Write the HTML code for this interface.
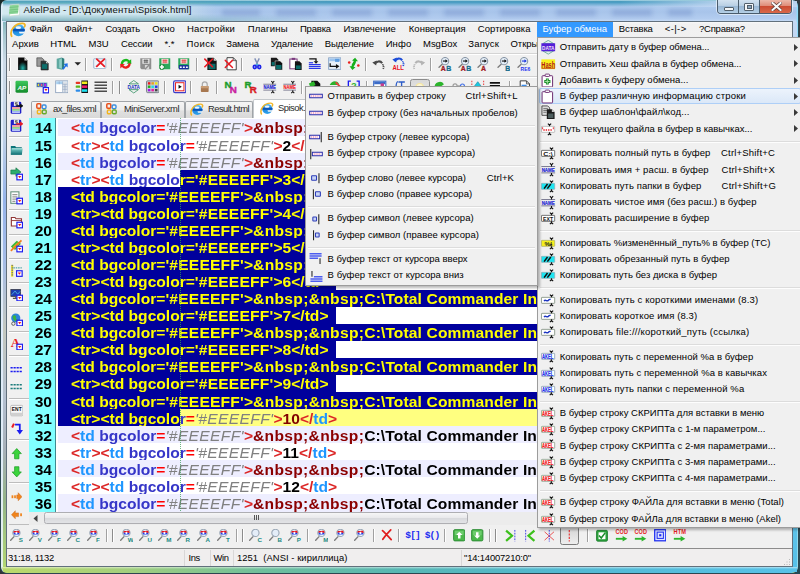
<!DOCTYPE html>
<html lang="ru"><head><meta charset="utf-8"><title>AkelPad - [D:\Документы\Spisok.html]</title>
<style>
html,body{margin:0;padding:0}
body{width:800px;height:574px;overflow:hidden;position:relative;background:linear-gradient(135deg,#1c2a28 0,#34383c 50%,#244a56 100%);font-family:'Liberation Sans',sans-serif}
.a{position:absolute}
.ed{position:absolute;left:58.2px;white-space:pre;font:bold 14.95px/17px 'Liberation Sans',sans-serif;height:17px;color:#000;margin-top:.55px;transform:scaleX(1.0435);transform-origin:0 0}
.ed i{font-weight:normal;font-style:italic;color:#808080;letter-spacing:.345px}
.r{color:#dc2626}.q{color:#ff0000}.t{color:#1e96ff}.b{color:#3636c8}.n{color:#8b0000}
.sel{color:#ffff00}
.c10{color:#800000}
.s{letter-spacing:.2px}.w{letter-spacing:.115px}.w .n,.nn{letter-spacing:.3px}
.ln{position:absolute;left:29px;width:23px;text-align:right;font:bold 14.95px/17px 'Liberation Sans',sans-serif;height:17px;color:#000;margin-top:.55px;transform:scaleX(1.0435);transform-origin:100% 0}
.sep{position:absolute;height:1px;background:#d7d7d7;border-bottom:1px solid #fff}
.mi{position:absolute;white-space:pre;color:#000}
</style></head><body>

<div class="a" style="left:0;top:0;width:799px;height:574px;border-radius:7px 7px 7px 7px;background:#2c4650"></div>
<div class="a" id="frame" style="left:1px;top:0;width:797px;height:573px;border-radius:6px 6px 6px 6px;
background:
linear-gradient(90deg,rgba(235,244,252,.9) 0,rgba(235,244,252,.85) 1.6px,rgba(255,255,255,0) 2.6px,rgba(255,255,255,0) 795px,rgba(140,220,250,.9) 796px),
linear-gradient(180deg,#cfeaf2 0,#4a9cbd 1.2px,#4c9ec4 2.5px,#84b7db 5px,#adcaee 7px,#a8c4ea 12px,#b3cdf0 19px,#c6dbf5 21px,#c3d8f3 40px,#9cb9ea 200px,#8fb0e6 330px,#9fc3d8 470px,#a9d18c 540px,#b7d76e 573px);"></div>

<div class="a" style="left:3px;top:22px;width:3.2px;height:546px;background:linear-gradient(180deg,#86b8c0 0,#a8c8d0 14px,#cddbe8 40px,#c4d4e6 108px,#96b4ea 178px,#a4bce8 238px,#c4c8c0 308px,#b4c0d0 378px,#a8b0b8 428px,#94b488 478px,#a8cc7c 523px,#b4d670 546px)"></div>
<div class="a" style="left:793px;top:22px;width:4px;height:550px;background:linear-gradient(180deg,#c3d8f3 0,#b5d4f2 150px,#8ccdf0 330px,#62c4ea 480px,#56c0e8 550px)"></div>
<div class="a" style="left:2px;top:567px;width:795px;height:6px;border-radius:0 0 6px 6px;background:linear-gradient(90deg,#bcd96a 0,#a5d07c 120px,#6fbf9c 260px,#58b7b4 400px,#52b9d2 560px,#58c2e8 795px)"></div>
<div class="a" style="left:2px;top:567px;width:795px;height:2px;background:linear-gradient(180deg,rgba(255,255,255,.55),rgba(255,255,255,0))"></div>
<div class="a" style="left:620px;top:1px;width:177px;height:6px;background:linear-gradient(90deg,rgba(195,216,243,0),rgba(195,216,243,.9) 60%)"></div>
<div class="a" style="left:222px;top:9px;width:470px;height:7px;background:repeating-linear-gradient(90deg,rgba(112,142,200,.42) 0,rgba(112,142,200,.42) 36px,rgba(0,0,0,0) 40px,rgba(0,0,0,0) 52px,rgba(112,142,200,.42) 56px);filter:blur(2.2px)"></div>
<div class="a" style="left:2px;top:3px;width:215px;height:18px;background:linear-gradient(90deg,rgba(214,236,240,.9) 0,rgba(214,236,240,.85) 78%,rgba(214,236,240,0) 100%);-webkit-mask-image:linear-gradient(180deg,rgba(0,0,0,0) 0,#000 4px)"></div>
<div class="a" style="left:2px;top:14px;width:330px;height:7px;background:linear-gradient(180deg,rgba(120,174,186,0),rgba(120,174,186,.85));-webkit-mask-image:linear-gradient(90deg,#000 0,#000 45%,rgba(0,0,0,0) 100%)"></div>
<div class="a" style="left:2px;top:0px;width:330px;height:4px;border-radius:6px 0 0 0;background:linear-gradient(180deg,rgba(150,206,196,.0),rgba(120,196,186,.55));-webkit-mask-image:linear-gradient(90deg,#000 0,#000 45%,rgba(0,0,0,0) 100%)"></div>
<svg class="a" style="left:8px;top:3px" width="13" height="14" viewBox="0 0 13 14"><path d="M2 2 L11 1.2 L11.5 12 L1.5 13 Z" fill="#fff" stroke="#c9d6c9" stroke-width=".6"/><path d="M2 2.2 L10.8 1.4 L10 10.5 L1 11.3 Z" fill="#8fd69a"/><path d="M1.6 4.5 L10.5 3.7 M1.4 7 L10.3 6.2 M1.2 9.3 L10 8.6" stroke="#6cc07a" stroke-width=".8"/></svg>
<span style="position:absolute;left:23.5px;top:3.9px;line-height:12.5px;font:normal 9.6px/12.5px 'Liberation Sans',sans-serif;letter-spacing:0.123px;color:#111;white-space:pre;">AkelPad - [D:\Документы\Spisok.html]</span>
<div class="a" style="left:717px;top:0;width:75px;height:13.5px;border:1px solid #4a5c6c;border-top:none;border-radius:0 0 4px 4px;box-sizing:border-box;overflow:hidden;box-shadow:0 0 0 1px rgba(255,255,255,.55)">
<div class="a" style="left:0;top:0;width:20px;height:13px;background:linear-gradient(180deg,#d3e2f0 0,#b8cfe4 45%,#9bb9d6 50%,#b4cfe6 100%);border-right:1px solid #4a5c6c"></div>
<div class="a" style="left:21px;top:0;width:20px;height:13px;background:linear-gradient(180deg,#d3e2f0 0,#b8cfe4 45%,#9bb9d6 50%,#b4cfe6 100%);border-right:1px solid #4a5c6c"></div>
<div class="a" style="left:42px;top:0;width:33px;height:13px;background:linear-gradient(180deg,#ecb8aa 0,#df8c78 45%,#cc4c32 50%,#d9684a 100%)"></div>
<div class="a" style="left:5.5px;top:6.5px;width:8px;height:2.5px;background:#f4f6f8;border:.6px solid #53606c;border-radius:1px"></div>
<div class="a" style="left:26px;top:2.5px;width:8px;height:6.5px;background:#f4f6f8;border:.6px solid #53606c;border-radius:1px"></div>
<div class="a" style="left:28.6px;top:4.8px;width:3.6px;height:2px;background:#8ca6bc;border:.5px solid #53606c"></div>
<svg class="a" style="left:52.5px;top:2.3px" width="11" height="9" viewBox="0 0 11 9"><path d="M1.5 1 L9.5 8 M9.5 1 L1.5 8" stroke="#5a3a36" stroke-width="3.4" stroke-linecap="square"/><path d="M1.5 1 L9.5 8 M9.5 1 L1.5 8" stroke="#f8f8f8" stroke-width="2.1" stroke-linecap="square"/></svg>
</div>
<div class="a" style="left:6px;top:21px;width:787px;height:546px;background:#62707c"></div>
<div class="a" id="client" style="left:7px;top:22px;width:785px;height:544px;background:#f0f0f0"></div>
<div class="a" style="left:7px;top:22px;width:785px;height:31px;background:linear-gradient(180deg,#fafafa 0,#f1f1f1 2px,#f0f0f0 100%)"></div>
<div class="a" style="left:7px;top:52.5px;width:785px;height:1px;background:#d4d4d4"></div>
<div class="a" style="left:7px;top:53.5px;width:785px;height:1px;background:#fff"></div>
<svg class="a" style="left:9.6px;top:22px" width="16.5" height="15.5" viewBox="0 0 16 15"><defs><linearGradient id="gie1" x1="0" y1="0" x2="0" y2="1"><stop offset="0" stop-color="#5cc0f6"/><stop offset=".5" stop-color="#1c84dc"/><stop offset="1" stop-color="#30a4ec"/></linearGradient></defs><circle cx="8.3" cy="7.9" r="5.9" fill="url(#gie1)"/><ellipse cx="8.1" cy="5.5" rx="2.7" ry="1.45" fill="#eef6fd"/><rect x="3" y="6.7" width="11.3" height="2.3" fill="#0c54b8"/><path d="M8.6 9.5 H14.6 L13.8 11.2 H9.2Z" fill="#f2f4f6"/><path d="M1.6 13.8 C-.9 8.2 5 1 12.4 1.3 C14.7 1.5 15 3.2 14 4.6" fill="none" stroke="#f2b626" stroke-width="1.7" stroke-linecap="round"/></svg>
<span style="position:absolute;left:29.5px;top:23.0px;line-height:12.3px;font:normal 9.5px/12.3px 'Liberation Sans',sans-serif;letter-spacing:-0.215px;color:#000;white-space:pre;">Файл</span>
<span style="position:absolute;left:64.5px;top:23.0px;line-height:12.3px;font:normal 9.5px/12.3px 'Liberation Sans',sans-serif;letter-spacing:-0.181px;color:#000;white-space:pre;">Файл+</span>
<span style="position:absolute;left:105.4px;top:23.0px;line-height:12.3px;font:normal 9.5px/12.3px 'Liberation Sans',sans-serif;letter-spacing:-0.216px;color:#000;white-space:pre;">Создать</span>
<span style="position:absolute;left:152.3px;top:23.0px;line-height:12.3px;font:normal 9.5px/12.3px 'Liberation Sans',sans-serif;letter-spacing:0.155px;color:#000;white-space:pre;">Окно</span>
<span style="position:absolute;left:187.0px;top:23.0px;line-height:12.3px;font:normal 9.5px/12.3px 'Liberation Sans',sans-serif;letter-spacing:0.156px;color:#000;white-space:pre;">Настройки</span>
<span style="position:absolute;left:247.7px;top:23.0px;line-height:12.3px;font:normal 9.5px/12.3px 'Liberation Sans',sans-serif;letter-spacing:0.226px;color:#000;white-space:pre;">Плагины</span>
<span style="position:absolute;left:299.9px;top:23.0px;line-height:12.3px;font:normal 9.5px/12.3px 'Liberation Sans',sans-serif;letter-spacing:-0.166px;color:#000;white-space:pre;">Правка</span>
<span style="position:absolute;left:343.5px;top:23.0px;line-height:12.3px;font:normal 9.5px/12.3px 'Liberation Sans',sans-serif;letter-spacing:-0.039px;color:#000;white-space:pre;">Извлечение</span>
<span style="position:absolute;left:408.8px;top:23.0px;line-height:12.3px;font:normal 9.5px/12.3px 'Liberation Sans',sans-serif;letter-spacing:0.009px;color:#000;white-space:pre;">Конвертация</span>
<span style="position:absolute;left:477.8px;top:23.0px;line-height:12.3px;font:normal 9.5px/12.3px 'Liberation Sans',sans-serif;letter-spacing:0.056px;color:#000;white-space:pre;">Сортировка</span>
<div class="a" style="left:537px;top:22px;width:76px;height:15.5px;background:#3399ff"></div>
<span style="position:absolute;left:542.5px;top:23.0px;line-height:12.3px;font:normal 9.5px/12.3px 'Liberation Sans',sans-serif;letter-spacing:-0.005px;color:#fff;white-space:pre;">Буфер обмена</span>
<span style="position:absolute;left:618.8px;top:23.0px;line-height:12.3px;font:normal 9.5px/12.3px 'Liberation Sans',sans-serif;letter-spacing:-0.202px;color:#000;white-space:pre;">Вставка</span>
<span style="position:absolute;left:664.7px;top:23.0px;line-height:12.3px;font:normal 9.5px/12.3px 'Liberation Sans',sans-serif;letter-spacing:0.402px;color:#000;white-space:pre;">&lt;-|-&gt;</span>
<span style="position:absolute;left:699.0px;top:23.0px;line-height:12.3px;font:normal 9.5px/12.3px 'Liberation Sans',sans-serif;letter-spacing:-0.227px;color:#000;white-space:pre;">?Справка?</span>
<span style="position:absolute;left:12.0px;top:38.2px;line-height:12.3px;font:normal 9.5px/12.3px 'Liberation Sans',sans-serif;letter-spacing:0.055px;color:#000;white-space:pre;">Архив</span>
<span style="position:absolute;left:50.2px;top:38.2px;line-height:12.3px;font:normal 9.5px/12.3px 'Liberation Sans',sans-serif;letter-spacing:0.106px;color:#000;white-space:pre;">HTML</span>
<span style="position:absolute;left:88.6px;top:38.2px;line-height:12.3px;font:normal 9.5px/12.3px 'Liberation Sans',sans-serif;letter-spacing:0.013px;color:#000;white-space:pre;">M3U</span>
<span style="position:absolute;left:121.0px;top:38.2px;line-height:12.3px;font:normal 9.5px/12.3px 'Liberation Sans',sans-serif;letter-spacing:-0.161px;color:#000;white-space:pre;">Сессии</span>
<span style="position:absolute;left:164.4px;top:38.2px;line-height:12.3px;font:normal 9.5px/12.3px 'Liberation Sans',sans-serif;letter-spacing:-0.016px;color:#000;white-space:pre;">*.*</span>
<span style="position:absolute;left:186.4px;top:38.2px;line-height:12.3px;font:normal 9.5px/12.3px 'Liberation Sans',sans-serif;letter-spacing:0.454px;color:#000;white-space:pre;">Поиск</span>
<span style="position:absolute;left:226.3px;top:38.2px;line-height:12.3px;font:normal 9.5px/12.3px 'Liberation Sans',sans-serif;letter-spacing:-0.113px;color:#000;white-space:pre;">Замена</span>
<span style="position:absolute;left:271.0px;top:38.2px;line-height:12.3px;font:normal 9.5px/12.3px 'Liberation Sans',sans-serif;letter-spacing:-0.100px;color:#000;white-space:pre;">Удаление</span>
<span style="position:absolute;left:324.7px;top:38.2px;line-height:12.3px;font:normal 9.5px/12.3px 'Liberation Sans',sans-serif;letter-spacing:-0.116px;color:#000;white-space:pre;">Выделение</span>
<span style="position:absolute;left:385.7px;top:38.2px;line-height:12.3px;font:normal 9.5px/12.3px 'Liberation Sans',sans-serif;letter-spacing:0.103px;color:#000;white-space:pre;">Инфо</span>
<span style="position:absolute;left:423.0px;top:38.2px;line-height:12.3px;font:normal 9.5px/12.3px 'Liberation Sans',sans-serif;letter-spacing:-0.021px;color:#000;white-space:pre;">MsgBox</span>
<span style="position:absolute;left:468.3px;top:38.2px;line-height:12.3px;font:normal 9.5px/12.3px 'Liberation Sans',sans-serif;letter-spacing:0.164px;color:#000;white-space:pre;">Запуск</span>
<span style="position:absolute;left:510.4px;top:38.2px;line-height:12.3px;font:normal 9.5px/12.3px 'Liberation Sans',sans-serif;letter-spacing:0.000px;color:#000;white-space:pre;">Открыть</span>
<div class="a" style="left:7px;top:76px;width:785px;height:1px;background:#d0d0d0"></div>
<div class="a" style="left:7px;top:77px;width:785px;height:1px;background:#fff"></div>
<div class="a" style="left:8.5px;top:57.5px;width:1px;height:13px;background:#8c8c8c"></div><div class="a" style="left:9.6px;top:57.5px;width:1px;height:13px;background:#fff"></div>
<svg class="a" style="left:16.4px;top:57.2px" width="13.5" height="13.5" viewBox="0 0 16 16"><defs><radialGradient id="gnew" cx=".5" cy=".85" r=".5"><stop offset="0" stop-color="#1fb0a8"/><stop offset="1" stop-color="#0a0a0a"/></radialGradient></defs><path d="M2.5 .5 H10 L13.5 4 V15.5 H2.5Z" fill="url(#gnew)"/><path d="M10 .5 V4 H13.5Z" fill="#d8d8d8"/></svg>
<svg class="a" style="left:35.8px;top:57.2px" width="13.5" height="13.5" viewBox="0 0 16 16"><path d="M1 1 H7 L9.5 3.5 V11 H1Z" fill="#9a9a9a" stroke="#444" stroke-width=".8"/><path d="M6 5 H12 L14.5 7.5 V15.3 H6Z" fill="#2a3a3a" stroke="#222" stroke-width=".8"/><rect x="7.2" y="8.5" width="6" height="5.6" fill="#0c6f6c"/><path d="M12 5 V7.5 H14.5Z" fill="#ddd"/></svg>
<svg class="a" style="left:55.2px;top:57.2px" width="13.5" height="13.5" viewBox="0 0 16 16"><path d="M2 2 L8 .5 V15 L2 13.5Z" fill="#5fa8a0"/><path d="M8 .5 L11 2 V13.5 L8 15Z" fill="#2f7f7c"/><path d="M5 3 L8 2.2 V13.6 L5 12.6Z" fill="#8fd0c8"/><path d="M15 7.5 V12.5 L13.2 11 L10 15 L8.6 13.6 L12 10 L10.2 8.2Z" fill="#1c6fe8"/></svg>
<svg class="a" style="left:72.2px;top:57.2px" width="11.5" height="13.5" viewBox="0 0 16 16"><path d="M3.5 6 H12.5 L8 10.5Z" fill="#222"/></svg>
<div class="a" style="left:85.2px;top:57.5px;width:1px;height:13px;background:#a0a0a0"></div><div class="a" style="left:86.2px;top:57.5px;width:1px;height:13px;background:#fff"></div>
<svg class="a" style="left:93.2px;top:57.2px" width="13.5" height="13.5" viewBox="0 0 16 16"><rect x=".8" y="2" width="14.4" height="11.5" rx="1" fill="#eef4fb" stroke="#8fa9c8" stroke-width=".9"/><path d="M1 13 L6 8 L10 8 L15 13" fill="#fff" stroke="#a8bcd6" stroke-width=".7"/><path d="M4.5 2.5 L13.5 11 M13.5 2.5 L4.5 11" stroke="#e81c24" stroke-width="2.1" stroke-linecap="round"/></svg>
<div class="a" style="left:110.7px;top:57.5px;width:1px;height:13px;background:#a0a0a0"></div><div class="a" style="left:111.7px;top:57.5px;width:1px;height:13px;background:#fff"></div>
<svg class="a" style="left:119.2px;top:57.2px" width="13.5" height="13.5" viewBox="0 0 16 16"><path d="M2.2 8.8 A6 6 0 0 1 12.6 4.2 L14.4 2.6 L14.6 8.2 L9 7.6 L10.8 5.9 A3.6 3.6 0 0 0 4.8 8.6Z" fill="#19b81c"/><path d="M13.8 7.4 A6 6 0 0 1 3.4 11.9 L1.6 13.5 L1.4 7.9 L7 8.5 L5.2 10.2 A3.6 3.6 0 0 0 11.2 7.5Z" fill="#e8201c"/></svg>
<svg class="a" style="left:138.6px;top:57.2px" width="13.5" height="13.5" viewBox="0 0 16 16"><path d="M1.5 1.5 H14.5 V14.5 H3 L1.5 13Z" fill="#8e8e8e"/><rect x="4" y="2.2" width="8.4" height="5.8" fill="#e8e8e8"/><path d="M5.4 4 H11 M5.4 6 H11 M7 2.8 V7.4 M9.4 2.8 V7.4" stroke="#333" stroke-width=".7"/><path d="M7 9.5 H12 V14.5 L7 14.5Z" fill="#d9d9d9"/><path d="M7 14.5 L12 9.5" stroke="#8e8e8e" stroke-width="1.6"/></svg>
<svg class="a" style="left:157.8px;top:57.2px" width="13.5" height="13.5" viewBox="0 0 16 16"><path d="M1.5 1.5 H14.5 V14.5 H3 L1.5 13Z" fill="#2ca85c"/><rect x="4" y="2.2" width="8.4" height="5.8" fill="#f4d8d8"/><path d="M5.4 4 H11 M5.4 6 H11 M7 2.8 V7.4 M9.4 2.8 V7.4" stroke="#e02020" stroke-width=".7"/><path d="M4.6 8.4 V15.4 M1.2 11.9 H8" stroke="#1d8a3a" stroke-width="3.6"/><path d="M4.6 9.2 V14.6 M2 11.9 H7.2" stroke="#fff" stroke-width="1.9"/></svg>
<svg class="a" style="left:177.2px;top:57.2px" width="13.5" height="13.5" viewBox="0 0 16 16"><path d="M1.5 1.5 H14.5 V14.5 H3 L1.5 13Z" fill="#2ca85c"/><rect x="4" y="2.2" width="8.4" height="5.8" fill="#f4d8d8"/><path d="M5.4 4 H11 M5.4 6 H11 M7 2.8 V7.4 M9.4 2.8 V7.4" stroke="#e02020" stroke-width=".7"/><rect x="2.2" y="9.6" width="11.6" height="5" fill="#182c9c"/><path d="M3.4 12.2 H5.6 M7 12.2 H9.2 M10.6 12.2 H12.8" stroke="#fff" stroke-width="1.7"/></svg>
<div class="a" style="left:195.5px;top:57.5px;width:1px;height:13px;background:#a0a0a0"></div><div class="a" style="left:196.5px;top:57.5px;width:1px;height:13px;background:#fff"></div>
<svg class="a" style="left:203.6px;top:57.2px" width="13.5" height="13.5" viewBox="0 0 16 16"><path d="M4 .8 H11.5 L15 4.3 V15.4 H4Z" fill="#101414"/><rect x="5.4" y="8" width="8.2" height="6.4" fill="#0a6a68"/><path d="M11.5 .8 V4.3 H15Z" fill="#ccc"/><path d="M1 2.5 L10 11.5 M10 2.5 L1 11.5" stroke="#e61a22" stroke-width="1.9" stroke-linecap="round"/></svg>
<svg class="a" style="left:224.1px;top:57.2px" width="13.5" height="13.5" viewBox="0 0 16 16"><path d="M3.5 .8 H11 L14.5 4.3 V15.2 H3.5Z" fill="#fff" stroke="#222" stroke-width="1"/><path d="M11 .8 V4.3 H14.5" fill="none" stroke="#222" stroke-width=".8"/><path d="M1.5 4 L10 12.5 M10 4 L1.5 12.5" stroke="#e61a22" stroke-width="1.7" stroke-linecap="round"/></svg>
<div class="a" style="left:241.0px;top:57.5px;width:1px;height:13px;background:#a0a0a0"></div><div class="a" style="left:242.0px;top:57.5px;width:1px;height:13px;background:#fff"></div>
<svg class="a" style="left:250.5px;top:57.2px" width="12" height="13.5" viewBox="0 0 16 16"><path d="M5 .8 L9.4 10 M11 .8 L6.6 10" stroke="#8090b8" stroke-width="1.9"/><circle cx="8" cy="9.2" r="1.3" fill="#3cc8e0"/><ellipse cx="5" cy="12.4" rx="1.9" ry="2.1" fill="none" stroke="#1c24e8" stroke-width="2.3"/><ellipse cx="11" cy="12.4" rx="1.9" ry="2.1" fill="none" stroke="#1c24e8" stroke-width="2.3"/></svg>
<svg class="a" style="left:269.6px;top:57.2px" width="13.5" height="13.5" viewBox="0 0 16 16"><path d="M1 .8 H7.6 L10 3.2 V11 H1Z" fill="#1a1a1a"/><path d="M6 4.6 H12 L14.8 7.4 V15.4 H6Z" fill="#111" stroke="#eee" stroke-width=".6"/><rect x="7.2" y="9.4" width="6.4" height="5" fill="#0b6d6a"/><rect x="2" y="6" width="3.4" height="4" fill="#0b6d6a"/></svg>
<svg class="a" style="left:288.8px;top:57.2px" width="13.5" height="13.5" viewBox="0 0 16 16"><rect x="1" y="2.4" width="8.6" height="11.6" fill="#fff" stroke="#7a3a7e" stroke-width="1.2"/><rect x="3.2" y="1" width="4.2" height="2.4" fill="#7a3a7e"/><path d="M7 5 H12.4 L15 7.6 V15.4 H7Z" fill="#141414"/><rect x="8.2" y="10" width="5.6" height="4.4" fill="#0b6d6a"/></svg>
<svg class="a" style="left:308.1px;top:57.2px" width="13.5" height="13.5" viewBox="0 0 16 16"><path d="M1.5 2.2 H9.5 V5.6" fill="none" stroke="#111" stroke-width="1.5"/><path d="M6.7 5 H12.3 L9.5 8Z" fill="#111"/><path d="M1 9 H15 M1 11.3 H15 M1 13.6 H15" stroke="#2a36e8" stroke-width="1.4"/><path d="M1 6.8 H6" stroke="#2a36e8" stroke-width="1.4"/></svg>
<svg class="a" style="left:327.8px;top:57.2px" width="13.5" height="13.5" viewBox="0 0 16 16"><rect x=".8" y="1" width="14.4" height="13.6" fill="#e9f1fa" stroke="#7f9cc0" stroke-width="1"/><rect x="1.6" y="1.8" width="12.8" height="3.2" fill="#9cc4ee"/><rect x="8.4" y="2.2" width="5" height="3.6" fill="#5c9ce0"/><path d="M2.6 7.4 V11 H9.6" fill="none" stroke="#111" stroke-width="1.5"/><path d="M9.4 8.2 L13.6 11 L9.4 13.8Z" fill="#111"/></svg>
<svg class="a" style="left:347.1px;top:57.2px" width="13.5" height="13.5" viewBox="0 0 16 16"><path d="M9.6 .8 L13 5 H10.8 L8 11 L5.4 9.6 L8.2 4.6 L6 4Z" fill="#18b01c"/><path d="M6.4 15.4 L3 11 H5.2 L8 5.4 L10.6 6.6 L7.8 11.6 L10 12.2Z" fill="#18b01c"/><circle cx="2.6" cy="6.4" r="1.5" fill="#e8201c"/><circle cx="13.4" cy="10" r="1.5" fill="#e8201c"/></svg>
<div class="a" style="left:365.0px;top:57.5px;width:1px;height:13px;background:#a0a0a0"></div><div class="a" style="left:366.0px;top:57.5px;width:1px;height:13px;background:#fff"></div>
<svg class="a" style="left:372.2px;top:57.2px" width="13.5" height="13.5" viewBox="0 0 16 16"><path d="M3 8.4 C5.2 4.6 10 4.2 12 7.4" fill="none" stroke="#484848" stroke-width="2.5"/><path d="M.4 6.4 L5.6 4 L5 10Z" fill="#484848"/><path d="M12 8.8 L14.2 9.8 M12.6 11 L14.8 11.8 M12.4 13.2 L14.4 13.8" stroke="#484848" stroke-width="1.2"/></svg>
<svg class="a" style="left:391.8px;top:57.2px" width="13.5" height="13.5" viewBox="0 0 16 16"><path d="M3 5.0 C5.2 1.2000000000000002 10 0.8000000000000003 12 4.0" fill="none" stroke="#1c4cd8" stroke-width="2.5"/><path d="M.4 3.0000000000000004 L5.6 0.6000000000000001 L5 6.6Z" fill="#1c4cd8"/><path d="M12 5.4 L14.2 6.4 M12.6 7.6 L14.8 8.4 M12.4 9.799999999999999 L14.4 10.4" stroke="#1c4cd8" stroke-width="1.2"/><text x="7.4" y="15.9" font-size="9" font-weight="bold" fill="#e8101c" text-anchor="middle" style="font-family:'Liberation Sans',sans-serif" textLength="13.6" lengthAdjust="spacingAndGlyphs">ALL</text></svg>
<svg class="a" style="left:412.2px;top:57.2px" width="13.5" height="13.5" viewBox="0 0 16 16"><g transform="translate(16,0) scale(-1,1)"><path d="M3 8.4 C5.2 4.6 10 4.2 12 7.4" fill="none" stroke="#b4b4b4" stroke-width="2.5"/><path d="M.4 6.4 L5.6 4 L5 10Z" fill="#b4b4b4"/><path d="M12 8.8 L14.2 9.8 M12.6 11 L14.8 11.8 M12.4 13.2 L14.4 13.8" stroke="#b4b4b4" stroke-width="1.2"/></g></svg>
<div class="a" style="left:429.5px;top:57.5px;width:1px;height:13px;background:#a0a0a0"></div><div class="a" style="left:430.5px;top:57.5px;width:1px;height:13px;background:#fff"></div>
<svg class="a" style="left:438.4px;top:57.2px" width="13.5" height="13.5" viewBox="0 0 16 16"><path d="M1.2 12.2 L5.6 8" stroke="#7c7c7c" stroke-width="1.6" stroke-linecap="round"/><circle cx="8.4" cy="4.9" r="4.3" fill="#e4eef8" stroke="#8a97a6" stroke-width="1.3"/><path d="M5.8 4.8 H9.8" stroke="#111" stroke-width="1.3"/><path d="M8.8 2.8 L11.6 4.8 L8.8 6.8Z" fill="#111"/><text x="6.2" y="16" font-size="8.2" font-weight="bold" fill="#a01c24" text-anchor="middle" style="font-family:'Liberation Sans',sans-serif" stroke-width=".35" stroke="#a01c24">A</text><text x="12.6" y="16" font-size="8.2" font-weight="bold" fill="#146c8c" text-anchor="middle" style="font-family:'Liberation Sans',sans-serif" stroke-width=".35" stroke="#146c8c">B</text></svg>
<svg class="a" style="left:458.4px;top:57.2px" width="13.5" height="13.5" viewBox="0 0 16 16"><path d="M1.2 12.2 L5.6 8" stroke="#7c7c7c" stroke-width="1.6" stroke-linecap="round"/><circle cx="8.4" cy="4.9" r="4.3" fill="#e4eef8" stroke="#8a97a6" stroke-width="1.3"/><path d="M5.8 4.8 H9.8" stroke="#111" stroke-width="1.3"/><path d="M8.8 2.8 L11.6 4.8 L8.8 6.8Z" fill="#111"/><text x="6.2" y="16" font-size="8.2" font-weight="bold" fill="#a01c24" text-anchor="middle" style="font-family:'Liberation Sans',sans-serif" stroke-width=".35" stroke="#a01c24">A</text><text x="12.6" y="16" font-size="8.2" font-weight="bold" fill="#146c8c" text-anchor="middle" style="font-family:'Liberation Sans',sans-serif" stroke-width=".35" stroke="#146c8c">B</text></svg>
<svg class="a" style="left:477.2px;top:57.2px" width="13.5" height="13.5" viewBox="0 0 16 16"><path d="M1.2 12.2 L5.6 8" stroke="#7c7c7c" stroke-width="1.6" stroke-linecap="round"/><circle cx="8.4" cy="4.9" r="4.3" fill="#e4eef8" stroke="#8a97a6" stroke-width="1.3"/><path d="M5.8 4.8 H9.8" stroke="#111" stroke-width="1.3"/><path d="M8.8 2.8 L11.6 4.8 L8.8 6.8Z" fill="#111"/><text x="7.6" y="16" font-size="8.2" font-weight="bold" fill="#a01c24" text-anchor="middle" style="font-family:'Liberation Sans',sans-serif" stroke-width=".35" stroke="#a01c24">A</text></svg>
<svg class="a" style="left:496.8px;top:57.2px" width="13.5" height="13.5" viewBox="0 0 16 16"><path d="M1.2 12.2 L5.6 8" stroke="#7c7c7c" stroke-width="1.6" stroke-linecap="round"/><circle cx="8.4" cy="4.9" r="4.3" fill="#e4eef8" stroke="#8a97a6" stroke-width="1.3"/><path d="M5.8 4.8 H9.8" stroke="#111" stroke-width="1.3"/><path d="M8.8 2.8 L11.6 4.8 L8.8 6.8Z" fill="#111"/><text x="12.6" y="16" font-size="8.2" font-weight="bold" fill="#146c8c" text-anchor="middle" style="font-family:'Liberation Sans',sans-serif" stroke-width=".35" stroke="#146c8c">B</text></svg>
<svg class="a" style="left:517.0px;top:57.2px" width="13.5" height="13.5" viewBox="0 0 16 16"><path d="M1.2 12.2 L5.6 8" stroke="#7c7c7c" stroke-width="1.6" stroke-linecap="round"/><circle cx="8.4" cy="4.9" r="4.3" fill="#e4eef8" stroke="#8a97a6" stroke-width="1.3"/><path d="M5.8 4.8 H9.8" stroke="#1c34e0" stroke-width="1.3"/><path d="M8.8 2.8 L11.6 4.8 L8.8 6.8Z" fill="#1c34e0"/><text x="10" y="16" font-size="7" font-weight="bold" fill="#1c34f0" text-anchor="middle" style="font-family:'Liberation Sans',sans-serif" textLength="11.6" lengthAdjust="spacingAndGlyphs">RE6</text></svg>
<div class="a" style="left:8.5px;top:80.5px;width:1px;height:13px;background:#8c8c8c"></div><div class="a" style="left:9.6px;top:80.5px;width:1px;height:13px;background:#fff"></div>
<svg class="a" style="left:15.4px;top:80.2px" width="13.5" height="13.5" viewBox="0 0 16 16"><defs><linearGradient id="gap" x1="0" y1="0" x2="0" y2="1"><stop offset="0" stop-color="#3cc85c"/><stop offset="1" stop-color="#148c2c"/></linearGradient></defs><rect x=".6" y="1" width="14.8" height="14" rx="1.6" fill="url(#gap)"/><text x="8" y="11.4" font-size="7.4" font-weight="bold" fill="#fff" text-anchor="middle" style="font-family:'Liberation Sans',sans-serif" font-style="italic">AP</text></svg>
<svg class="a" style="left:35.8px;top:80.2px" width="13.5" height="13.5" viewBox="0 0 16 16"><rect x=".5" y="3" width="13" height="5.6" fill="#6fb8b8"/><rect x="1.6" y="4" width="2.4" height="3.6" fill="#e8e81c" stroke="#3434d0" stroke-width=".7"/><rect x="5.6" y="4" width="2.4" height="3.6" fill="#e86c6c" stroke="#3434d0" stroke-width=".7"/><rect x="9.6" y="4" width="2.4" height="3.6" fill="#e81ce8" stroke="#3434d0" stroke-width=".7"/><rect x="8.6" y="9" width="6.4" height="6.2" fill="#fff" stroke="#1c1cf0" stroke-width="1.4"/><path d="M10 10.8 H13.6 L11.8 13.4Z" fill="#f01c1c"/></svg>
<svg class="a" style="left:54.8px;top:80.2px" width="13.5" height="13.5" viewBox="0 0 16 16"><rect x=".8" y="1" width="14.4" height="14" fill="#fff" stroke="#8ca0bc" stroke-width="1"/><rect x="1.4" y="1.6" width="13.2" height="3.4" fill="#a8d0f0"/><rect x="9" y="1.6" width="5.6" height="12.8" fill="#dfe4ea"/><path d="M9 1.6 V14.4 M9 5 H14.6 M9 8 H14.6 M9 11 H14.6 M11.8 5 V14.4 M5 1.6 V5" stroke="#8ca0bc" stroke-width=".7"/></svg>
<svg class="a" style="left:74.8px;top:80.2px" width="13.5" height="13.5" viewBox="0 0 16 16"><rect x="7.6" y=".6" width="8" height="14.8" fill="#111"/><rect x="8.2" y="1.8" width="6.4" height="3" fill="#f0f01c"/><rect x="8.2" y="6.4" width="6.4" height="3" fill="#f01c6c"/><rect x="8.2" y="11" width="6.4" height="3" fill="#1ce0f0"/><rect x=".8" y="2" width="5.4" height="2.6" rx="1" fill="#e83424"/><rect x=".8" y="6.6" width="5.4" height="2.6" rx="1" fill="#5cb41c"/><rect x=".8" y="11.2" width="5.4" height="2.6" rx="1" fill="#2c8ce8"/></svg>
<svg class="a" style="left:93.8px;top:80.2px" width="13.5" height="13.5" viewBox="0 0 16 16"><path d="M.6 2.6 H15.4 M.6 6.2 H15.4 M.6 9.8 H15.4 M.6 13.4 H15.4" stroke="#4c4c4c" stroke-width="1.7"/></svg>
<div class="a" style="left:112.0px;top:80.5px;width:1px;height:13px;background:#a0a0a0"></div><div class="a" style="left:113.0px;top:80.5px;width:1px;height:13px;background:#fff"></div>
<div class="a" style="left:118.5px;top:80.5px;width:1px;height:13px;background:#8c8c8c"></div><div class="a" style="left:119.6px;top:80.5px;width:1px;height:13px;background:#fff"></div>
<svg class="a" style="left:126.8px;top:80.2px" width="13.5" height="13.5" viewBox="0 0 16 16"><path d="M8 .6 L13.6 4.6 H2.4Z M8 15.4 L13.6 11.4 H2.4Z" fill="none" stroke="#2c8c5c" stroke-width=".9"/><text x="8" y="10.6" font-size="6.6" font-weight="bold" fill="#1c34c0" text-anchor="middle" style="font-family:'Liberation Sans',sans-serif" textLength="15" lengthAdjust="spacingAndGlyphs">DATA</text></svg>
<svg class="a" style="left:145.8px;top:80.2px" width="13.5" height="13.5" viewBox="0 0 16 16"><rect x=".6" y="1" width="14.8" height="14" rx="1.4" fill="#c8ccd4" stroke="#6c747c" stroke-width="1"/><rect x="2.2" y="2.6" width="3" height="2.8" fill="#e81c1c"/><rect x="6.4" y="2.6" width="3" height="2.8" fill="#e8a01c"/><rect x="10.600000000000001" y="2.6" width="3" height="2.8" fill="#e8e81c"/><rect x="2.2" y="6.6" width="3" height="2.8" fill="#1cb41c"/><rect x="6.4" y="6.6" width="3" height="2.8" fill="#1ce0e0"/><rect x="10.600000000000001" y="6.6" width="3" height="2.8" fill="#1c3ce8"/><rect x="2.2" y="10.6" width="3" height="2.8" fill="#a01ce8"/><rect x="6.4" y="10.6" width="3" height="2.8" fill="#e81ca0"/><rect x="10.600000000000001" y="10.6" width="3" height="2.8" fill="#444"/></svg>
<div class="a" style="left:164.0px;top:80.5px;width:1px;height:13px;background:#a0a0a0"></div><div class="a" style="left:165.0px;top:80.5px;width:1px;height:13px;background:#fff"></div>
<svg class="a" style="left:172.8px;top:80.2px" width="13.5" height="13.5" viewBox="0 0 16 16"><rect x=".8" y="1" width="14.4" height="14" rx="1.6" fill="#fff" stroke="#3c3cc8" stroke-width="1.5"/><rect x="3" y="3.2" width="10" height="9.6" fill="#fff" stroke="#e82424" stroke-width="1.2"/><path d="M6.6 5.6 L10.4 8 L6.6 10.4Z" fill="#111"/></svg>
<div class="a" style="left:190.0px;top:80.5px;width:1px;height:13px;background:#a0a0a0"></div><div class="a" style="left:191.0px;top:80.5px;width:1px;height:13px;background:#fff"></div>
<svg class="a" style="left:199.2px;top:80.2px" width="11.5" height="13.5" viewBox="0 0 16 16"><path d="M4.6 7.4 V4.6 A3.4 3.4 0 0 1 11.4 4.6 V7.4" fill="none" stroke="#a8a8a8" stroke-width="1.7"/><rect x="2.6" y="7" width="10.8" height="8.4" rx="1" fill="#a87850"/><rect x="2.6" y="7" width="10.8" height="3" rx="1" fill="#c89c74"/></svg>
<div class="a" style="left:216.0px;top:80.5px;width:1px;height:13px;background:#a0a0a0"></div><div class="a" style="left:217.0px;top:80.5px;width:1px;height:13px;background:#fff"></div>
<svg class="a" style="left:224.2px;top:80.2px" width="13.5" height="13.5" viewBox="0 0 16 16"><text x="4.8" y="9.6" font-size="11.6" font-weight="bold" fill="#1c9c2c" text-anchor="middle" style="font-family:'Liberation Sans',sans-serif" stroke="#1c9c2c" stroke-width=".5">N</text><text x="11" y="15.6" font-size="11.6" font-weight="bold" fill="#c81ca0" text-anchor="middle" style="font-family:'Liberation Sans',sans-serif" stroke="#c81ca0" stroke-width=".5">N</text></svg>
<svg class="a" style="left:243.7px;top:80.2px" width="13.5" height="13.5" viewBox="0 0 16 16"><text x="4.8" y="9.6" font-size="11.6" font-weight="bold" fill="#1c9c2c" text-anchor="middle" style="font-family:'Liberation Sans',sans-serif" stroke="#1c9c2c" stroke-width=".5">R</text><text x="11" y="15.6" font-size="11.6" font-weight="bold" fill="#d81c24" text-anchor="middle" style="font-family:'Liberation Sans',sans-serif" stroke="#d81c24" stroke-width=".5">R</text></svg>
<svg class="a" style="left:263.2px;top:80.2px" width="13.5" height="13.5" viewBox="0 0 16 16"><path d="M.4 5 H15.6 M.4 12 H15.6" stroke="#4c4c6c" stroke-width=".8"/><text x="8" y="10.9" font-size="6.6" font-weight="bold" fill="#1c24d0" text-anchor="middle" style="font-family:'Liberation Sans',sans-serif" textLength="14.6" lengthAdjust="spacingAndGlyphs" stroke="#1c24d0" stroke-width=".2">NAME</text><path d="M9.8 1.2 L11.6 3.2 L13.4 1.2 M11.6 3 V5 M9.8 15.6 L11.6 13.8 L13.4 15.6 M11.6 14 V12" fill="none" stroke="#111" stroke-width="1.2"/></svg>
<svg class="a" style="left:282.9px;top:80.2px" width="13.5" height="13.5" viewBox="0 0 16 16"><path d="M.4 5 H15.6 M.4 12 H15.6" stroke="#4c4c6c" stroke-width=".8"/><text x="8" y="10.9" font-size="6.6" font-weight="bold" fill="#f01c24" text-anchor="middle" style="font-family:'Liberation Sans',sans-serif" textLength="14.6" lengthAdjust="spacingAndGlyphs" stroke="#f01c24" stroke-width=".2">NAME</text><path d="M9.8 1.2 L11.6 3.2 L13.4 1.2 M11.6 3 V5 M9.8 15.6 L11.6 13.8 L13.4 15.6 M11.6 14 V12" fill="none" stroke="#111" stroke-width="1.2"/></svg>
<div class="a" style="left:301.0px;top:80.5px;width:1px;height:13px;background:#a0a0a0"></div><div class="a" style="left:302.0px;top:80.5px;width:1px;height:13px;background:#fff"></div>
<svg class="a" style="left:308.2px;top:80.2px" width="13.5" height="13.5" viewBox="0 0 16 16"><path d="M4 .8 H11 L14.6 4.4 V15 H4Z" fill="#111"/><path d="M1 4 L7 1.6 L9 6 L3 9Z" fill="#2cb42c"/></svg>
<svg class="a" style="left:327.8px;top:80.2px" width="13.5" height="13.5" viewBox="0 0 16 16"><path d="M2 6 C4 1 10 0 13 4 L11 6Z" fill="#2cb42c"/><path d="M10 2 L15 7 L13.6 8.6 L8.4 3.6Z" fill="#e83c3c"/></svg>
<svg class="a" style="left:347.4px;top:80.2px" width="13.5" height="13.5" viewBox="0 0 16 16"><path d="M4.6 1.4 H1.6 V14.6 H4.6 M11.4 1.4 H14.4 V14.6 H11.4" fill="none" stroke="#1c1cf0" stroke-width="1.6"/><text x="8" y="11" font-size="11" font-weight="bold" fill="#2cb42c" text-anchor="middle" style="font-family:'Liberation Sans',sans-serif" >?</text></svg>
<div class="a" style="left:366.0px;top:80.5px;width:1px;height:13px;background:#a0a0a0"></div><div class="a" style="left:367.0px;top:80.5px;width:1px;height:13px;background:#fff"></div>
<svg class="a" style="left:373.2px;top:80.2px" width="13.5" height="13.5" viewBox="0 0 16 16"><rect x=".8" y="1.4" width="14.4" height="13" fill="#fff" stroke="#3c6cc8" stroke-width="1.3"/><rect x="1.4" y="2" width="13.2" height="3" fill="#3c6cc8"/><rect x="9" y="4" width="4" height="3.4" fill="#c83c8c"/></svg>
<svg class="a" style="left:392.6px;top:80.2px" width="13.5" height="13.5" viewBox="0 0 16 16"><path d="M5.6 1.6 C3 3.6 3 12 5.6 14.4" fill="none" stroke="#2c5cc8" stroke-width="1.4"/><path d="M6.4 2.4 H14 M10.2 2.4 V14" stroke="#2c5cc8" stroke-width="1.6"/></svg>
<div class="a" style="left:410px;top:78.5px;width:19.5px;height:18px;border:1px solid #8c8c8c;border-radius:2.5px;box-sizing:border-box;background:linear-gradient(180deg,#d8d8d8,#ececec)"></div>
<svg class="a" style="left:412.8px;top:80.8px" width="13.5" height="13.5" viewBox="0 0 16 16"><circle cx="8" cy="8" r="5.6" fill="#f8e8a0"/><circle cx="8" cy="7" r="3.4" fill="#fdf6d4"/></svg>
<svg class="a" style="left:432.8px;top:80.2px" width="13.5" height="13.5" viewBox="0 0 16 16"><path d="M2 9 A6 6 0 0 1 13 5 L9 8Z" fill="#2cb42c"/><path d="M14 7 A6 6 0 0 1 4 13 L8 9Z" fill="#e8201c"/></svg>
<svg class="a" style="left:451.8px;top:80.2px" width="13.5" height="13.5" viewBox="0 0 16 16"><circle cx="3.6" cy="7" r="2.4" fill="none" stroke="#9c9c9c" stroke-width="1.4"/><path d="M6 7 H10" stroke="#9c9c9c" stroke-width="1.3"/><circle cx="12.4" cy="7" r="2.3" fill="none" stroke="#3c6ce8" stroke-width="1.4"/></svg>
<svg class="a" style="left:471.2px;top:80.2px" width="13.5" height="13.5" viewBox="0 0 16 16"><path d="M8 2 L14 10 H2Z" fill="#1cc8e0" stroke="#1c8ca8" stroke-width=".8"/><path d="M1 1 V12 M15 1 V12" stroke="#e83c3c" stroke-width="1.2" stroke-dasharray="1.6 1.6"/></svg>
<svg class="a" style="left:489.2px;top:80.2px" width="13.5" height="13.5" viewBox="0 0 16 16"><path d="M1 3.4 H13 M1 7 H13" stroke="#111" stroke-width="2"/><path d="M1 10.6 H11" stroke="#e83c8c" stroke-width="2"/></svg>
<div class="a" style="left:508.5px;top:80.5px;width:1px;height:13px;background:#a0a0a0"></div><div class="a" style="left:509.5px;top:80.5px;width:1px;height:13px;background:#fff"></div>
<svg class="a" style="left:517.5px;top:80.2px" width="13.5" height="13.5" viewBox="0 0 16 16"><path d="M2.6 1 H10 L13.6 4.6 V15 H2.6Z" fill="#fff" stroke="#333" stroke-width="1.1"/><path d="M10 1 V4.6 H13.6" fill="none" stroke="#333" stroke-width=".9"/><rect x="4.2" y="5.6" width="6" height="2.4" fill="#3c8ce8"/><rect x="4.2" y="9" width="7.6" height="2.4" fill="#5cc45c"/></svg>
<div class="a" style="left:29px;top:100px;width:763px;height:18px;background:#f0f0f0"></div>
<div class="a" style="left:31px;top:101px;width:70px;height:16.5px;background:linear-gradient(180deg,#f5f5f5 0,#ececec 50%,#e0e0e0 55%,#d9d9d9 100%);border:1px solid #a0a4a8;border-bottom:none;box-sizing:border-box;border-radius:2px 2px 0 0"></div>
<span style="position:absolute;left:53.0px;top:103.1px;line-height:12.2px;font:normal 9.4px/12.2px 'Liberation Sans',sans-serif;letter-spacing:-0.499px;color:#2a2a2a;white-space:pre;">ax_files.xml</span>
<svg class="a" style="left:35.5px;top:103px" width="11" height="12" viewBox="0 0 11 12"><rect x=".8" y=".8" width="4" height="4.4" rx="1" fill="none" stroke="#e8501c" stroke-width="1.5"/><rect x="6.2" y="2" width="3.8" height="3.6" rx="1" fill="none" stroke="#3a8ee0" stroke-width="1.4"/><rect x="1.4" y="7" width="3.6" height="3.8" rx="1" fill="none" stroke="#f2b41c" stroke-width="1.4"/><rect x="6.4" y="7" width="3.8" height="3.8" rx="1" fill="none" stroke="#68a92c" stroke-width="1.4"/></svg>
<div class="a" style="left:101px;top:101px;width:83.5px;height:16.5px;background:linear-gradient(180deg,#f5f5f5 0,#ececec 50%,#e0e0e0 55%,#d9d9d9 100%);border:1px solid #a0a4a8;border-bottom:none;box-sizing:border-box;border-radius:2px 2px 0 0"></div>
<span style="position:absolute;left:124.0px;top:103.1px;line-height:12.2px;font:normal 9.4px/12.2px 'Liberation Sans',sans-serif;letter-spacing:-0.462px;color:#2a2a2a;white-space:pre;">MiniServer.xml</span>
<svg class="a" style="left:106px;top:103px" width="11" height="12" viewBox="0 0 11 12"><rect x=".8" y=".8" width="4" height="4.4" rx="1" fill="none" stroke="#e8501c" stroke-width="1.5"/><rect x="6.2" y="2" width="3.8" height="3.6" rx="1" fill="none" stroke="#3a8ee0" stroke-width="1.4"/><rect x="1.4" y="7" width="3.6" height="3.8" rx="1" fill="none" stroke="#f2b41c" stroke-width="1.4"/><rect x="6.4" y="7" width="3.8" height="3.8" rx="1" fill="none" stroke="#68a92c" stroke-width="1.4"/></svg>
<div class="a" style="left:184.5px;top:101px;width:68.5px;height:16.5px;background:linear-gradient(180deg,#f5f5f5 0,#ececec 50%,#e0e0e0 55%,#d9d9d9 100%);border:1px solid #a0a4a8;border-bottom:none;box-sizing:border-box;border-radius:2px 2px 0 0"></div>
<span style="position:absolute;left:208.0px;top:103.1px;line-height:12.2px;font:normal 9.4px/12.2px 'Liberation Sans',sans-serif;letter-spacing:-0.536px;color:#2a2a2a;white-space:pre;">Result.html</span>
<svg class="a" style="left:189.5px;top:102.5px" width="14" height="13" viewBox="0 0 16 15"><defs><linearGradient id="gie2" x1="0" y1="0" x2="0" y2="1"><stop offset="0" stop-color="#5cc0f6"/><stop offset=".5" stop-color="#1c84dc"/><stop offset="1" stop-color="#30a4ec"/></linearGradient></defs><circle cx="8.3" cy="7.9" r="5.9" fill="url(#gie2)"/><ellipse cx="8.1" cy="5.5" rx="2.7" ry="1.45" fill="#eef6fd"/><rect x="3" y="6.7" width="11.3" height="2.3" fill="#0c54b8"/><path d="M8.6 9.5 H14.6 L13.8 11.2 H9.2Z" fill="#f2f4f6"/><path d="M1.6 13.8 C-.9 8.2 5 1 12.4 1.3 C14.7 1.5 15 3.2 14 4.6" fill="none" stroke="#f2b626" stroke-width="1.7" stroke-linecap="round"/></svg>
<div class="a" style="left:253px;top:98.5px;width:69px;height:20px;background:#fff;border:1px solid #c4c8cc;border-bottom:none;box-sizing:border-box;border-radius:2px 2px 0 0"></div>
<span style="position:absolute;left:278.0px;top:102.3px;line-height:12.2px;font:normal 9.4px/12.2px 'Liberation Sans',sans-serif;letter-spacing:-0.497px;color:#2a2a2a;white-space:pre;">Spisok.html</span>
<svg class="a" style="left:259.5px;top:101.5px" width="14" height="13" viewBox="0 0 16 15"><defs><linearGradient id="gie3" x1="0" y1="0" x2="0" y2="1"><stop offset="0" stop-color="#5cc0f6"/><stop offset=".5" stop-color="#1c84dc"/><stop offset="1" stop-color="#30a4ec"/></linearGradient></defs><circle cx="8.3" cy="7.9" r="5.9" fill="url(#gie3)"/><ellipse cx="8.1" cy="5.5" rx="2.7" ry="1.45" fill="#eef6fd"/><rect x="3" y="6.7" width="11.3" height="2.3" fill="#0c54b8"/><path d="M8.6 9.5 H14.6 L13.8 11.2 H9.2Z" fill="#f2f4f6"/><path d="M1.6 13.8 C-.9 8.2 5 1 12.4 1.3 C14.7 1.5 15 3.2 14 4.6" fill="none" stroke="#f2b626" stroke-width="1.7" stroke-linecap="round"/></svg>
<div class="a" style="left:29px;top:117.5px;width:224px;height:1px;background:#9a9ea2"></div>
<div class="a" style="left:7px;top:100px;width:22px;height:425px;background:#f0f0f0"></div>
<div class="a" style="left:9px;top:135.5px;width:20px;height:1px;background:#bdbdbd"></div><div class="a" style="left:9px;top:136.5px;width:20px;height:1px;background:#fff"></div>
<div class="a" style="left:9px;top:160.5px;width:20px;height:1px;background:#bdbdbd"></div><div class="a" style="left:9px;top:161.5px;width:20px;height:1px;background:#fff"></div>
<div class="a" style="left:9px;top:184.5px;width:20px;height:1px;background:#bdbdbd"></div><div class="a" style="left:9px;top:185.5px;width:20px;height:1px;background:#fff"></div>
<div class="a" style="left:9px;top:208.5px;width:20px;height:1px;background:#bdbdbd"></div><div class="a" style="left:9px;top:209.5px;width:20px;height:1px;background:#fff"></div>
<div class="a" style="left:9px;top:233.5px;width:20px;height:1px;background:#bdbdbd"></div><div class="a" style="left:9px;top:234.5px;width:20px;height:1px;background:#fff"></div>
<div class="a" style="left:9px;top:257.9px;width:20px;height:1px;background:#bdbdbd"></div><div class="a" style="left:9px;top:258.9px;width:20px;height:1px;background:#fff"></div>
<div class="a" style="left:9px;top:281.9px;width:20px;height:1px;background:#bdbdbd"></div><div class="a" style="left:9px;top:282.9px;width:20px;height:1px;background:#fff"></div>
<div class="a" style="left:9px;top:306.2px;width:20px;height:1px;background:#bdbdbd"></div><div class="a" style="left:9px;top:307.2px;width:20px;height:1px;background:#fff"></div>
<div class="a" style="left:9px;top:330.5px;width:20px;height:1px;background:#bdbdbd"></div><div class="a" style="left:9px;top:331.5px;width:20px;height:1px;background:#fff"></div>
<div class="a" style="left:9px;top:355.0px;width:20px;height:1px;background:#bdbdbd"></div><div class="a" style="left:9px;top:356.0px;width:20px;height:1px;background:#fff"></div>
<div class="a" style="left:9px;top:398.2px;width:20px;height:1px;background:#bdbdbd"></div><div class="a" style="left:9px;top:399.2px;width:20px;height:1px;background:#fff"></div>
<div class="a" style="left:9px;top:439.2px;width:20px;height:1px;background:#bdbdbd"></div><div class="a" style="left:9px;top:440.2px;width:20px;height:1px;background:#fff"></div>
<div class="a" style="left:9px;top:481.5px;width:20px;height:1px;background:#bdbdbd"></div><div class="a" style="left:9px;top:482.5px;width:20px;height:1px;background:#fff"></div>
<div class="a" style="left:9px;top:523.5px;width:20px;height:1px;background:#bdbdbd"></div><div class="a" style="left:9px;top:524.5px;width:20px;height:1px;background:#fff"></div>
<svg class="a" style="left:9.9px;top:101.0px" width="13.5" height="13.5" viewBox="0 0 16 16"><rect x=".8" y=".8" width="12.6" height="14.4" rx="1.6" fill="#2020c8"/><rect x="4.6" y=".8" width="6" height="5" fill="#f0f0f0"/><path d="M6.4 2 H9 M6.4 2 V3.4 H8.6 V4.8 H6.4" fill="none" stroke="#333" stroke-width=".9"/><rect x="2.6" y="7.2" width="9" height="7" fill="#fff"/><path d="M2.6 8.3 H11.6" stroke="#f07c7c" stroke-width="1.7"/><path d="M2.6 10.6 H11.6" stroke="#6cc46c" stroke-width="1.7"/><path d="M2.6 12.9 H11.6" stroke="#8ca4f4" stroke-width="1.7"/><path d="M7.4 5.8 H13.4" stroke="#111" stroke-width="1.7"/><path d="M12 3 L16 5.8 L12 8.6Z" fill="#111"/></svg>
<svg class="a" style="left:9.9px;top:118.8px" width="13.5" height="13.5" viewBox="0 0 16 16"><rect x=".8" y=".8" width="12.6" height="14.4" rx="1.6" fill="#2020c8"/><rect x="4.6" y=".8" width="6" height="5" fill="#f0f0f0"/><path d="M6.4 2 H9 M6.4 2 V3.4 H8.6 V4.8 H6.4" fill="none" stroke="#333" stroke-width=".9"/><rect x="2.6" y="7.2" width="9" height="7" fill="#fff"/><path d="M2.6 8.3 H11.6" stroke="#f07c7c" stroke-width="1.7"/><path d="M2.6 10.6 H11.6" stroke="#6cc46c" stroke-width="1.7"/><path d="M2.6 12.9 H11.6" stroke="#8ca4f4" stroke-width="1.7"/><path d="M7.4 5.8 H13.4" stroke="#e81c24" stroke-width="1.7"/><path d="M12 3 L16 5.8 L12 8.6Z" fill="#e81c24"/></svg>
<svg class="a" style="left:9.9px;top:143.4px" width="13.5" height="13.5" viewBox="0 0 16 16"><defs><linearGradient id="gfo" x1="0" y1="0" x2="0" y2="1"><stop offset="0" stop-color="#7cd0cc"/><stop offset="1" stop-color="#0c6c70"/></linearGradient></defs><path d="M1 3.6 H6 L7.4 5 H14 V13.6 H1Z" fill="#0c7478"/><path d="M1.6 6.4 H15 L14 14 H1Z" fill="url(#gfo)"/><path d="M2 6.8 H14.4" stroke="#d8f4f0" stroke-width=".9"/></svg>
<svg class="a" style="left:9.9px;top:167.2px" width="13.5" height="13.5" viewBox="0 0 16 16"><path d="M1 3.6 H7 V1 L13 6 L7 11 V8.4 H1Z" fill="#2cac6c" stroke="#187848" stroke-width=".8"/><rect x="8.2" y="8.6" width="6.6" height="6.6" fill="#fff" stroke="#1c1cf0" stroke-width="1.4"/><path d="M9.6 10.6 H13.399999999999999 L11.5 13.399999999999999Z" fill="#f01c1c"/></svg>
<svg class="a" style="left:9.9px;top:191.2px" width="13.5" height="13.5" viewBox="0 0 16 16"><rect x="1" y="1" width="9.6" height="13.6" fill="#fff" stroke="#5c8c74" stroke-width="1.2"/><path d="M2.8 4.4 H8.8 M2.8 7 H8.8 M2.8 9.6 H8.8 M2.8 12.2 H6.4" stroke="#555" stroke-width=".9"/><rect x="8.2" y="8.6" width="6.6" height="6.6" fill="#fff" stroke="#1c1cf0" stroke-width="1.4"/><path d="M9.6 10.6 H13.399999999999999 L11.5 13.399999999999999Z" fill="#f01c1c"/></svg>
<svg class="a" style="left:9.9px;top:215.1px" width="13.5" height="13.5" viewBox="0 0 16 16"><path d="M1.6 3 H6 L7 4.4 H13.6 V13 H1.6Z" fill="#fff" stroke="#903434" stroke-width="1.3"/><path d="M1.6 6.6 H13.6" stroke="#903434" stroke-width="1.1"/><rect x="8.2" y="8.6" width="6.6" height="6.6" fill="#fff" stroke="#1c1cf0" stroke-width="1.4"/><path d="M9.6 10.6 H13.399999999999999 L11.5 13.399999999999999Z" fill="#f01c1c"/></svg>
<svg class="a" style="left:9.9px;top:239.2px" width="13.5" height="13.5" viewBox="0 0 16 16"><path d="M1 9 L8 2 L13 5.6 L6 13Z" fill="#3cb43c"/><path d="M3.4 9.6 L9 4 L11 5.6 L5.4 11.4Z" fill="#e8d41c"/><path d="M1 14 L13.6 1.6" stroke="#f07c1c" stroke-width="2"/><rect x="8.2" y="8.6" width="6.6" height="6.6" fill="#fff" stroke="#1c1cf0" stroke-width="1.4"/><path d="M9.6 10.6 H13.399999999999999 L11.5 13.399999999999999Z" fill="#f01c1c"/></svg>
<svg class="a" style="left:9.9px;top:263.6px" width="13.5" height="13.5" viewBox="0 0 16 16"><path d="M2.6 1 V15" stroke="#f0e81c" stroke-width="2.6"/><path d="M2.6 1 V15" stroke="#2c2cc8" stroke-width="1" stroke-dasharray="1.6 1.2"/><path d="M4 4.6 H14" stroke="#1c8c8c" stroke-width="1.1" stroke-dasharray="1.8 1"/><rect x="7.8" y="8" width="6.6" height="6.6" fill="#fff" stroke="#1c1cf0" stroke-width="1.4"/><path d="M9.2 10 H13.0 L11.1 12.8Z" fill="#f01c1c"/></svg>
<svg class="a" style="left:9.9px;top:287.6px" width="13.5" height="13.5" viewBox="0 0 16 16"><rect x="1" y="1.6" width="11.6" height="8.4" fill="#1c3cb0" stroke="#333" stroke-width=".8"/><path d="M2 8 L6 3.6 L9 7.4 L12 4" fill="none" stroke="#4cb4e8" stroke-width="1"/><path d="M3.4 12.4 H10.4 M6.8 10 V12.4" stroke="#555" stroke-width="1.4"/><rect x="8.2" y="8.6" width="6.6" height="6.6" fill="#fff" stroke="#1c1cf0" stroke-width="1.4"/><path d="M9.6 10.6 H13.399999999999999 L11.5 13.399999999999999Z" fill="#f01c1c"/></svg>
<svg class="a" style="left:9.9px;top:312.8px" width="13.5" height="13.5" viewBox="0 0 16 16"><circle cx="6.8" cy="6" r="5.4" fill="#2c84d8"/><path d="M3 4 C5 1.6 8 3 7 5.4 C6 7.6 9.6 7 9 9.6 C7 10.6 4 9.4 3 4Z" fill="#3cb43c"/><circle cx="4" cy="12.6" r="2" fill="none" stroke="#555" stroke-width="1.1"/><rect x="8.2" y="8.6" width="6.6" height="6.6" fill="#fff" stroke="#1c1cf0" stroke-width="1.4"/><path d="M9.6 10.6 H13.399999999999999 L11.5 13.399999999999999Z" fill="#f01c1c"/></svg>
<svg class="a" style="left:9.9px;top:336.8px" width="13.5" height="13.5" viewBox="0 0 16 16"><text x="6.6" y="12" font-size="15.5" font-weight="bold" fill="#e8201c" text-anchor="middle" style="font-family:'Liberation Serif',serif">A</text><rect x="8.2" y="8.6" width="6.6" height="6.6" fill="#fff" stroke="#1c1cf0" stroke-width="1.4"/><path d="M9.6 10.6 H13.399999999999999 L11.5 13.399999999999999Z" fill="#f01c1c"/></svg>
<svg class="a" style="left:9.9px;top:362.6px" width="13.5" height="13.5" viewBox="0 0 16 16"><path d="M.6 5.6 H15 M.6 10 H15" stroke="#1c1cf0" stroke-width="1.7" stroke-dasharray="2.6 1"/></svg>
<svg class="a" style="left:9.9px;top:380.2px" width="13.5" height="13.5" viewBox="0 0 16 16"><path d="M.6 5.6 H15 M.6 10 H15" stroke="#1c7c7c" stroke-width="1.7" stroke-dasharray="2.6 1"/></svg>
<svg class="a" style="left:9.9px;top:404.2px" width="13.5" height="13.5" viewBox="0 0 16 16"><rect x=".8" y="1.6" width="14.4" height="12.4" rx="1.4" fill="#f8f8f8" stroke="#b4b4b4" stroke-width="1"/><rect x="1.2" y="10.4" width="13.6" height="3.2" fill="#d0d0d0"/><text x="8" y="8.6" font-size="6.6" font-weight="bold" fill="#111" text-anchor="middle" style="font-family:'Liberation Sans',sans-serif" textLength="11.6" lengthAdjust="spacingAndGlyphs">ENT</text></svg>
<svg class="a" style="left:9.9px;top:422.2px" width="13.5" height="13.5" viewBox="0 0 16 16"><path d="M1.4 6 L3.6 1.4 L5.8 2.4 L3.6 7Z" fill="#e81c24"/><path d="M6 3 H11.6 V10" fill="none" stroke="#1c1cf0" stroke-width="2.1"/><path d="M7.8 9.4 H15.4 L11.6 14.8Z" fill="#1c1cf0"/></svg>
<svg class="a" style="left:10.9px;top:448.1px" width="11.5" height="11.5" viewBox="0 0 16 16"><path d="M8 .8 L14.4 7.8 H11 V15 H5 V7.8 H1.6Z" fill="#3cd43c" stroke="#1c9c24" stroke-width="1"/></svg>
<svg class="a" style="left:10.9px;top:465.8px" width="11.5" height="11.5" viewBox="0 0 16 16"><path d="M8 15.2 L14.4 8.2 H11 V1 H5 V8.2 H1.6Z" fill="#3cd43c" stroke="#1c9c24" stroke-width="1"/></svg>
<svg class="a" style="left:10.9px;top:490.9px" width="11.5" height="11.5" viewBox="0 0 16 16"><rect x=".8" y="6" width="2.4" height="4" fill="#f0841c"/><rect x="4.4" y="6" width="2.4" height="4" fill="#f0841c"/><path d="M8 5.4 H10 V2.4 L15.4 8 L10 13.6 V10.6 H8Z" fill="#f0841c" stroke="#c8641c" stroke-width=".6"/></svg>
<svg class="a" style="left:10.9px;top:508.8px" width="11.5" height="11.5" viewBox="0 0 16 16"><rect x="12.8" y="6" width="2.4" height="4" fill="#f0841c"/><path d="M10.6 5.4 H6 V2.4 L.6 8 L6 13.6 V10.6 H10.6Z" fill="#f0841c" stroke="#c8641c" stroke-width=".6"/></svg>
<div class="a" style="left:29px;top:118px;width:763px;height:394px;background:#fff"></div>
<div class="a" style="left:29px;top:118px;width:26px;height:394px;background:#80ffff"></div>
<div class="a" style="left:55px;top:118px;width:.7px;height:394px;background:#3d8a90"></div>
<div class="ln" style="top:118.9px">14</div>
<div class="a" style="left:58.3px;top:118.9px;width:734px;height:17.12px;background:#eeeeff"></div>
<div class="ed" style="top:118.9px">   <span class=r>&lt;</span><span class=t>td</span> <span class=b>bgcolor</span><span class=q>=</span><i>'#EEEEFF'</i><span class=r>&gt;</span><span class=w><span class=n>&amp;nbsp;&amp;nbsp;</span>C:\Total Commander Ins</span></div>
<div class="ln" style="top:135.97px">15</div>
<div class="ed" style="top:135.97px">   <span class=r>&lt;</span><span class=t>tr</span><span class=r>&gt;&lt;</span><span class=t>td</span> <span class=b>bgcolor</span><span class=q>=</span><i>'#EEEEFF'</i><span class=r>&gt;</span><span class=c2>2</span><span class=r>&lt;/</span><span class=t>td</span><span class=r>&gt;</span></div>
<div class="ln" style="top:153.04000000000002px">16</div>
<div class="a" style="left:58.3px;top:153.04000000000002px;width:734px;height:17.12px;background:#eeeeff"></div>
<div class="ed" style="top:153.04000000000002px">   <span class=r>&lt;</span><span class=t>td</span> <span class=b>bgcolor</span><span class=q>=</span><i>'#EEEEFF'</i><span class=r>&gt;</span><span class=w><span class=n>&amp;nbsp;&amp;nbsp;</span>C:\Total Commander Ins</span></div>
<div class="ln" style="top:170.11px">17</div>
<div class="ed" style="top:170.11px">   <span class=r>&lt;</span><span class=t>tr</span><span class=r>&gt;&lt;</span><span class=t>td</span> <span class=b>bgcolor</span><span class=q>=</span><i>'#EEEEFF'</i><span class=r>&gt;</span><span class=c3>3</span><span class=r>&lt;/</span><span class=t>td</span><span class=r>&gt;</span></div>
<div class="a" style="left:180px;top:170.11px;width:156.4px;height:17.12px;background:#00009c;overflow:hidden"><div class="ed sel" style="left:-121.8px;top:0">   &lt;tr&gt;&lt;td bgcolor=<span class=s>'#EEEEFF'</span>&gt;3&lt;/td&gt;</div></div>
<div class="ln" style="top:187.18px">18</div>
<div class="a" style="left:58.3px;top:187.18px;width:734px;height:17.12px;background:#00009c"></div>
<div class="ed sel" style="top:187.18px">   &lt;td bgcolor=<span class=s>'#EEEEFF'</span>&gt;<span class=w><span class=nn>&amp;nbsp;&amp;nbsp;</span>C:\Total Commander Ins</span></div>
<div class="ln" style="top:204.25px">19</div>
<div class="a" style="left:58.3px;top:204.25px;width:278.2px;height:17.12px;background:#00009c"></div>
<div class="ed sel" style="top:204.25px">   &lt;tr&gt;&lt;td bgcolor=<span class=s>'#EEEEFF'</span>&gt;4&lt;/td&gt;</div>
<div class="ln" style="top:221.32px">20</div>
<div class="a" style="left:58.3px;top:221.32px;width:734px;height:17.12px;background:#00009c"></div>
<div class="ed sel" style="top:221.32px">   &lt;td bgcolor=<span class=s>'#EEEEFF'</span>&gt;<span class=w><span class=nn>&amp;nbsp;&amp;nbsp;</span>C:\Total Commander Ins</span></div>
<div class="ln" style="top:238.39000000000001px">21</div>
<div class="a" style="left:58.3px;top:238.39000000000001px;width:278.2px;height:17.12px;background:#00009c"></div>
<div class="ed sel" style="top:238.39000000000001px">   &lt;tr&gt;&lt;td bgcolor=<span class=s>'#EEEEFF'</span>&gt;5&lt;/td&gt;</div>
<div class="ln" style="top:255.46px">22</div>
<div class="a" style="left:58.3px;top:255.46px;width:734px;height:17.12px;background:#00009c"></div>
<div class="ed sel" style="top:255.46px">   &lt;td bgcolor=<span class=s>'#EEEEFF'</span>&gt;<span class=w><span class=nn>&amp;nbsp;&amp;nbsp;</span>C:\Total Commander Ins</span></div>
<div class="ln" style="top:272.53px">23</div>
<div class="a" style="left:58.3px;top:272.53px;width:278.2px;height:17.12px;background:#00009c"></div>
<div class="ed sel" style="top:272.53px">   &lt;tr&gt;&lt;td bgcolor=<span class=s>'#EEEEFF'</span>&gt;6&lt;/td&gt;</div>
<div class="ln" style="top:289.6px">24</div>
<div class="a" style="left:58.3px;top:289.6px;width:734px;height:17.12px;background:#00009c"></div>
<div class="ed sel" style="top:289.6px">   &lt;td bgcolor=<span class=s>'#EEEEFF'</span>&gt;<span class=w><span class=nn>&amp;nbsp;&amp;nbsp;</span>C:\Total Commander Ins</span></div>
<div class="ln" style="top:306.67px">25</div>
<div class="a" style="left:58.3px;top:306.67px;width:278.2px;height:17.12px;background:#00009c"></div>
<div class="ed sel" style="top:306.67px">   &lt;tr&gt;&lt;td bgcolor=<span class=s>'#EEEEFF'</span>&gt;7&lt;/td&gt;</div>
<div class="ln" style="top:323.74px">26</div>
<div class="a" style="left:58.3px;top:323.74px;width:734px;height:17.12px;background:#00009c"></div>
<div class="ed sel" style="top:323.74px">   &lt;td bgcolor=<span class=s>'#EEEEFF'</span>&gt;<span class=w><span class=nn>&amp;nbsp;&amp;nbsp;</span>C:\Total Commander Ins</span></div>
<div class="ln" style="top:340.81px">27</div>
<div class="a" style="left:58.3px;top:340.81px;width:278.2px;height:17.12px;background:#00009c"></div>
<div class="ed sel" style="top:340.81px">   &lt;tr&gt;&lt;td bgcolor=<span class=s>'#EEEEFF'</span>&gt;8&lt;/td&gt;</div>
<div class="ln" style="top:357.88px">28</div>
<div class="a" style="left:58.3px;top:357.88px;width:734px;height:17.12px;background:#00009c"></div>
<div class="ed sel" style="top:357.88px">   &lt;td bgcolor=<span class=s>'#EEEEFF'</span>&gt;<span class=w><span class=nn>&amp;nbsp;&amp;nbsp;</span>C:\Total Commander Ins</span></div>
<div class="ln" style="top:374.95000000000005px">29</div>
<div class="a" style="left:58.3px;top:374.95000000000005px;width:278.2px;height:17.12px;background:#00009c"></div>
<div class="ed sel" style="top:374.95000000000005px">   &lt;tr&gt;&lt;td bgcolor=<span class=s>'#EEEEFF'</span>&gt;9&lt;/td&gt;</div>
<div class="ln" style="top:392.02px">30</div>
<div class="a" style="left:58.3px;top:392.02px;width:734px;height:17.12px;background:#00009c"></div>
<div class="ed sel" style="top:392.02px">   &lt;td bgcolor=<span class=s>'#EEEEFF'</span>&gt;<span class=w><span class=nn>&amp;nbsp;&amp;nbsp;</span>C:\Total Commander Ins</span></div>
<div class="ln" style="top:409.09000000000003px">31</div>
<div class="a" style="left:180px;top:409.09000000000003px;width:612px;height:17.12px;background:#ffff80"></div>
<div class="ed" style="top:409.09000000000003px">   <span class=r>&lt;</span><span class=t>tr</span><span class=r>&gt;&lt;</span><span class=t>td</span> <span class=b>bgcolor</span><span class=q>=</span><i>'#EEEEFF'</i><span class=r>&gt;</span><span class=c10>10</span><span class=r>&lt;/</span><span class=t>td</span><span class=r>&gt;</span></div>
<div class="a" style="left:58.3px;top:409.09000000000003px;width:121.7px;height:17.12px;background:#00009c;overflow:hidden"><div class="ed sel" style="left:-.1px;top:0">   &lt;tr&gt;&lt;td bgcolor=<span class=s>'#EEEEFF'</span>&gt;10&lt;/td&gt;</div></div>
<div class="ln" style="top:426.15999999999997px">32</div>
<div class="a" style="left:58.3px;top:426.15999999999997px;width:734px;height:17.12px;background:#eeeeff"></div>
<div class="ed" style="top:426.15999999999997px">   <span class=r>&lt;</span><span class=t>td</span> <span class=b>bgcolor</span><span class=q>=</span><i>'#EEEEFF'</i><span class=r>&gt;</span><span class=w><span class=n>&amp;nbsp;&amp;nbsp;</span>C:\Total Commander Ins</span></div>
<div class="ln" style="top:443.23px">33</div>
<div class="ed" style="top:443.23px">   <span class=r>&lt;</span><span class=t>tr</span><span class=r>&gt;&lt;</span><span class=t>td</span> <span class=b>bgcolor</span><span class=q>=</span><i>'#EEEEFF'</i><span class=r>&gt;</span><span class=c11>11</span><span class=r>&lt;/</span><span class=t>td</span><span class=r>&gt;</span></div>
<div class="ln" style="top:460.29999999999995px">34</div>
<div class="a" style="left:58.3px;top:460.29999999999995px;width:734px;height:17.12px;background:#eeeeff"></div>
<div class="ed" style="top:460.29999999999995px">   <span class=r>&lt;</span><span class=t>td</span> <span class=b>bgcolor</span><span class=q>=</span><i>'#EEEEFF'</i><span class=r>&gt;</span><span class=w><span class=n>&amp;nbsp;&amp;nbsp;</span>C:\Total Commander Ins</span></div>
<div class="ln" style="top:477.37px">35</div>
<div class="ed" style="top:477.37px">   <span class=r>&lt;</span><span class=t>tr</span><span class=r>&gt;&lt;</span><span class=t>td</span> <span class=b>bgcolor</span><span class=q>=</span><i>'#EEEEFF'</i><span class=r>&gt;</span><span class=c12>12</span><span class=r>&lt;/</span><span class=t>td</span><span class=r>&gt;</span></div>
<div class="ln" style="top:494.44000000000005px">36</div>
<div class="a" style="left:58.3px;top:494.44000000000005px;width:734px;height:17.12px;background:#eeeeff"></div>
<div class="ed" style="top:494.44000000000005px">   <span class=r>&lt;</span><span class=t>td</span> <span class=b>bgcolor</span><span class=q>=</span><i>'#EEEEFF'</i><span class=r>&gt;</span><span class=w><span class=n>&amp;nbsp;&amp;nbsp;</span>C:\Total Commander Ins</span></div>
<div class="a" style="left:179.6px;top:118px;width:1px;height:394px;background:repeating-linear-gradient(180deg,rgba(60,160,90,.75) 0,rgba(60,160,90,.75) 1px,rgba(0,0,0,0) 1px,rgba(0,0,0,0) 2px)"></div>
<div class="a" style="left:29px;top:511.5px;width:763px;height:13.5px;background:#ececec"></div>
<div class="a" style="left:43.8px;top:512.2px;width:424px;height:11.6px;border:1px solid #aeaeb2;border-radius:2.5px;box-sizing:border-box;background:linear-gradient(180deg,#f6f6f6 0,#eaeaec 45%,#d8d9dc 50%,#e2e3e6 100%)"></div>
<svg class="a" style="left:33px;top:514.5px" width="5" height="7" viewBox="0 0 5 7"><path d="M4.5 0 L4.5 7 L.5 3.5 Z" fill="#444"/></svg>
<div class="a" style="left:253.5px;top:515px;width:1px;height:5px;background:#555;box-shadow:2px 0 0 #555,4px 0 0 #555"></div>
<div class="a" style="left:7px;top:525px;width:785px;height:23px;background:#f0f0f0"></div>
<svg class="a" style="left:9.9px;top:528.9px" width="13.5" height="13.5" viewBox="0 0 16 16"><path d="M.8 13.4 L4.8 9" stroke="#7c7c7c" stroke-width="1.6" stroke-linecap="round"/><circle cx="7.6" cy="4.6" r="4.3" fill="#e4edf8" stroke="#9aa7b6" stroke-width="1.3"/><path d="M4.4 2.4 H10.4 L11.2 4.4 H4Z" fill="#e8141c"/><path d="M4 4.4 H11.2 L10.4 6.6 H4.8Z" fill="#1c3ce8"/><path d="M5.6 4.6 L8.6 2.6 V6.4Z" fill="#fff"/><path d="M8 2.2 L11 2.2 L11 5Z" fill="#e8141c"/><text x="12.8" y="15.2" font-size="7.4" font-weight="bold" fill="#1c8c84" text-anchor="middle" style="font-family:'Liberation Sans',sans-serif" >S</text></svg>
<svg class="a" style="left:29.1px;top:528.9px" width="13.5" height="13.5" viewBox="0 0 16 16"><path d="M.8 13.4 L4.8 9" stroke="#7c7c7c" stroke-width="1.6" stroke-linecap="round"/><circle cx="7.6" cy="4.6" r="4.3" fill="#e4edf8" stroke="#9aa7b6" stroke-width="1.3"/><path d="M4.4 2.4 H10.4 L11.2 4.4 H4Z" fill="#e8141c"/><path d="M4 4.4 H11.2 L10.4 6.6 H4.8Z" fill="#1c3ce8"/><path d="M5.6 4.6 L8.6 2.6 V6.4Z" fill="#fff"/><path d="M8 2.2 L11 2.2 L11 5Z" fill="#e8141c"/><text x="12.8" y="15.2" font-size="7.4" font-weight="bold" fill="#1c8c84" text-anchor="middle" style="font-family:'Liberation Sans',sans-serif" >V</text></svg>
<svg class="a" style="left:48.2px;top:528.9px" width="13.5" height="13.5" viewBox="0 0 16 16"><path d="M.8 13.4 L4.8 9" stroke="#7c7c7c" stroke-width="1.6" stroke-linecap="round"/><circle cx="7.6" cy="4.6" r="4.3" fill="#e4edf8" stroke="#9aa7b6" stroke-width="1.3"/><path d="M4.4 2.4 H10.4 L11.2 4.4 H4Z" fill="#e8141c"/><path d="M4 4.4 H11.2 L10.4 6.6 H4.8Z" fill="#1c3ce8"/><path d="M5.6 4.6 L8.6 2.6 V6.4Z" fill="#fff"/><path d="M8 2.2 L11 2.2 L11 5Z" fill="#e8141c"/><text x="12.8" y="15.2" font-size="7.4" font-weight="bold" fill="#1c8c84" text-anchor="middle" style="font-family:'Liberation Sans',sans-serif" >F</text></svg>
<svg class="a" style="left:67.4px;top:528.9px" width="13.5" height="13.5" viewBox="0 0 16 16"><path d="M.8 13.4 L4.8 9" stroke="#7c7c7c" stroke-width="1.6" stroke-linecap="round"/><circle cx="7.6" cy="4.6" r="4.3" fill="#e4edf8" stroke="#9aa7b6" stroke-width="1.3"/><path d="M4.4 2.4 H10.4 L11.2 4.4 H4Z" fill="#e8141c"/><path d="M4 4.4 H11.2 L10.4 6.6 H4.8Z" fill="#1c3ce8"/><path d="M5.6 4.6 L8.6 2.6 V6.4Z" fill="#fff"/><path d="M8 2.2 L11 2.2 L11 5Z" fill="#e8141c"/><text x="12.8" y="15.2" font-size="7.4" font-weight="bold" fill="#1c8c84" text-anchor="middle" style="font-family:'Liberation Sans',sans-serif" >C</text></svg>
<svg class="a" style="left:86.6px;top:528.9px" width="13.5" height="13.5" viewBox="0 0 16 16"><path d="M.8 13.4 L4.8 9" stroke="#7c7c7c" stroke-width="1.6" stroke-linecap="round"/><circle cx="7.6" cy="4.6" r="4.3" fill="#e4edf8" stroke="#9aa7b6" stroke-width="1.3"/><path d="M4.4 2.4 H10.4 L11.2 4.4 H4Z" fill="#e8141c"/><path d="M4 4.4 H11.2 L10.4 6.6 H4.8Z" fill="#1c3ce8"/><path d="M5.6 4.6 L8.6 2.6 V6.4Z" fill="#fff"/><path d="M8 2.2 L11 2.2 L11 5Z" fill="#e8141c"/><text x="12.8" y="15.2" font-size="7.4" font-weight="bold" fill="#1c8c84" text-anchor="middle" style="font-family:'Liberation Sans',sans-serif" >F</text></svg>
<div class="a" style="left:106.0px;top:529px;width:1px;height:13px;background:#a0a0a0"></div><div class="a" style="left:107.0px;top:529px;width:1px;height:13px;background:#fff"></div>
<div class="a" style="left:111.5px;top:529px;width:1px;height:13px;background:#8c8c8c"></div><div class="a" style="left:112.6px;top:529px;width:1px;height:13px;background:#fff"></div>
<svg class="a" style="left:119.8px;top:528.9px" width="13.5" height="13.5" viewBox="0 0 16 16"><path d="M.8 13.4 L4.8 9" stroke="#7c7c7c" stroke-width="1.6" stroke-linecap="round"/><circle cx="7.6" cy="4.6" r="4.3" fill="#e4edf8" stroke="#9aa7b6" stroke-width="1.3"/><path d="M4.4 2.4 H10.4 L11.2 4.4 H4Z" fill="#e8141c"/><path d="M4 4.4 H11.2 L10.4 6.6 H4.8Z" fill="#1c3ce8"/><path d="M5.6 4.6 L8.6 2.6 V6.4Z" fill="#fff"/><path d="M8 2.2 L11 2.2 L11 5Z" fill="#e8141c"/><text x="12.8" y="15.2" font-size="7.4" font-weight="bold" fill="#1c8c84" text-anchor="middle" style="font-family:'Liberation Sans',sans-serif" >W</text></svg>
<svg class="a" style="left:139.0px;top:528.9px" width="13.5" height="13.5" viewBox="0 0 16 16"><path d="M.8 13.4 L4.8 9" stroke="#7c7c7c" stroke-width="1.6" stroke-linecap="round"/><circle cx="7.6" cy="4.6" r="4.3" fill="#e4edf8" stroke="#9aa7b6" stroke-width="1.3"/><path d="M4.4 2.4 H10.4 L11.2 4.4 H4Z" fill="#e8141c"/><path d="M4 4.4 H11.2 L10.4 6.6 H4.8Z" fill="#1c3ce8"/><path d="M5.6 4.6 L8.6 2.6 V6.4Z" fill="#fff"/><path d="M8 2.2 L11 2.2 L11 5Z" fill="#e8141c"/><text x="12.8" y="15.2" font-size="7.4" font-weight="bold" fill="#1c8c84" text-anchor="middle" style="font-family:'Liberation Sans',sans-serif" >U</text></svg>
<svg class="a" style="left:158.2px;top:528.9px" width="13.5" height="13.5" viewBox="0 0 16 16"><path d="M.8 13.4 L4.8 9" stroke="#7c7c7c" stroke-width="1.6" stroke-linecap="round"/><circle cx="7.6" cy="4.6" r="4.3" fill="#e4edf8" stroke="#9aa7b6" stroke-width="1.3"/><path d="M4.4 2.4 H10.4 L11.2 4.4 H4Z" fill="#e8141c"/><path d="M4 4.4 H11.2 L10.4 6.6 H4.8Z" fill="#1c3ce8"/><path d="M5.6 4.6 L8.6 2.6 V6.4Z" fill="#fff"/><path d="M8 2.2 L11 2.2 L11 5Z" fill="#e8141c"/><text x="12.8" y="15.2" font-size="7.4" font-weight="bold" fill="#1c8c84" text-anchor="middle" style="font-family:'Liberation Sans',sans-serif" >M</text></svg>
<svg class="a" style="left:177.4px;top:528.9px" width="13.5" height="13.5" viewBox="0 0 16 16"><path d="M.8 13.4 L4.8 9" stroke="#7c7c7c" stroke-width="1.6" stroke-linecap="round"/><circle cx="7.6" cy="4.6" r="4.3" fill="#e4edf8" stroke="#9aa7b6" stroke-width="1.3"/><path d="M4.4 2.4 H10.4 L11.2 4.4 H4Z" fill="#e8141c"/><path d="M4 4.4 H11.2 L10.4 6.6 H4.8Z" fill="#1c3ce8"/><path d="M5.6 4.6 L8.6 2.6 V6.4Z" fill="#fff"/><path d="M8 2.2 L11 2.2 L11 5Z" fill="#e8141c"/><text x="12.8" y="15.2" font-size="7.4" font-weight="bold" fill="#1c8c84" text-anchor="middle" style="font-family:'Liberation Sans',sans-serif" >R</text></svg>
<svg class="a" style="left:197.0px;top:528.9px" width="13.5" height="13.5" viewBox="0 0 16 16"><path d="M.8 13.4 L4.8 9" stroke="#7c7c7c" stroke-width="1.6" stroke-linecap="round"/><circle cx="7.6" cy="4.6" r="4.3" fill="#e4edf8" stroke="#9aa7b6" stroke-width="1.3"/><path d="M4.4 2.4 H10.4 L11.2 4.4 H4Z" fill="#e8141c"/><path d="M4 4.4 H11.2 L10.4 6.6 H4.8Z" fill="#1c3ce8"/><path d="M5.6 4.6 L8.6 2.6 V6.4Z" fill="#fff"/><path d="M8 2.2 L11 2.2 L11 5Z" fill="#e8141c"/><text x="12.8" y="15.2" font-size="7.4" font-weight="bold" fill="#1c8c84" text-anchor="middle" style="font-family:'Liberation Sans',sans-serif" >A</text></svg>
<svg class="a" style="left:216.8px;top:528.9px" width="13.5" height="13.5" viewBox="0 0 16 16"><path d="M.8 13.4 L4.8 9" stroke="#7c7c7c" stroke-width="1.6" stroke-linecap="round"/><circle cx="7.6" cy="4.6" r="4.3" fill="#e4edf8" stroke="#9aa7b6" stroke-width="1.3"/><path d="M4.4 2.4 H10.4 L11.2 4.4 H4Z" fill="#e8141c"/><path d="M4 4.4 H11.2 L10.4 6.6 H4.8Z" fill="#1c3ce8"/><path d="M5.6 4.6 L8.6 2.6 V6.4Z" fill="#fff"/><path d="M8 2.2 L11 2.2 L11 5Z" fill="#e8141c"/><text x="12.8" y="15.2" font-size="7.4" font-weight="bold" fill="#1c8c84" text-anchor="middle" style="font-family:'Liberation Sans',sans-serif" >T</text></svg>
<div class="a" style="left:236.3px;top:529px;width:1px;height:13px;background:#a0a0a0"></div><div class="a" style="left:237.3px;top:529px;width:1px;height:13px;background:#fff"></div>
<div class="a" style="left:241.5px;top:529px;width:1px;height:13px;background:#8c8c8c"></div><div class="a" style="left:242.6px;top:529px;width:1px;height:13px;background:#fff"></div>
<svg class="a" style="left:249.0px;top:528.9px" width="13.5" height="13.5" viewBox="0 0 16 16"><path d="M.8 13.4 L4.8 9" stroke="#7c7c7c" stroke-width="1.6" stroke-linecap="round"/><circle cx="7.6" cy="4.6" r="4.3" fill="#e4edf8" stroke="#9aa7b6" stroke-width="1.3"/><text x="12.8" y="15.2" font-size="7.4" font-weight="bold" fill="#1c8c84" text-anchor="middle" style="font-family:'Liberation Sans',sans-serif" >C</text></svg>
<svg class="a" style="left:268.5px;top:528.9px" width="13.5" height="13.5" viewBox="0 0 16 16"><path d="M.8 13.4 L4.8 9" stroke="#7c7c7c" stroke-width="1.6" stroke-linecap="round"/><circle cx="7.6" cy="4.6" r="4.3" fill="#e4edf8" stroke="#9aa7b6" stroke-width="1.3"/><text x="12.8" y="15.2" font-size="7.4" font-weight="bold" fill="#1c8c84" text-anchor="middle" style="font-family:'Liberation Sans',sans-serif" >B</text></svg>
<svg class="a" style="left:288.2px;top:528.9px" width="13.5" height="13.5" viewBox="0 0 16 16"><path d="M.8 13.4 L4.8 9" stroke="#7c7c7c" stroke-width="1.6" stroke-linecap="round"/><circle cx="7.6" cy="4.6" r="4.3" fill="#e4edf8" stroke="#9aa7b6" stroke-width="1.3"/><path d="M4.4 2.4 H10.4 L11.2 4.4 H4Z" fill="#e8141c"/><path d="M4 4.4 H11.2 L10.4 6.6 H4.8Z" fill="#1c3ce8"/><path d="M5.6 4.6 L8.6 2.6 V6.4Z" fill="#fff"/><path d="M8 2.2 L11 2.2 L11 5Z" fill="#e8141c"/><text x="12.8" y="15.2" font-size="7.4" font-weight="bold" fill="#1c8c84" text-anchor="middle" style="font-family:'Liberation Sans',sans-serif" >P</text></svg>
<div class="a" style="left:307.0px;top:529px;width:1px;height:13px;background:#a0a0a0"></div><div class="a" style="left:308.0px;top:529px;width:1px;height:13px;background:#fff"></div>
<svg class="a" style="left:314.5px;top:528.9px" width="13.5" height="13.5" viewBox="0 0 16 16"><path d="M.8 13.4 L4.8 9" stroke="#7c7c7c" stroke-width="1.6" stroke-linecap="round"/><circle cx="7.6" cy="4.6" r="4.3" fill="#e4edf8" stroke="#9aa7b6" stroke-width="1.3"/><path d="M4.4 2.4 H10.4 L11.2 4.4 H4Z" fill="#e8141c"/><path d="M4 4.4 H11.2 L10.4 6.6 H4.8Z" fill="#1c3ce8"/><path d="M5.6 4.6 L8.6 2.6 V6.4Z" fill="#fff"/><path d="M8 2.2 L11 2.2 L11 5Z" fill="#e8141c"/><text x="12.8" y="15.2" font-size="7.4" font-weight="bold" fill="#1c8c84" text-anchor="middle" style="font-family:'Liberation Sans',sans-serif" >M</text></svg>
<svg class="a" style="left:334.1px;top:528.9px" width="13.5" height="13.5" viewBox="0 0 16 16"><path d="M.8 13.4 L4.8 9" stroke="#7c7c7c" stroke-width="1.6" stroke-linecap="round"/><circle cx="7.6" cy="4.6" r="4.3" fill="#e4edf8" stroke="#9aa7b6" stroke-width="1.3"/><path d="M4.4 2.4 H10.4 L11.2 4.4 H4Z" fill="#e8141c"/><path d="M4 4.4 H11.2 L10.4 6.6 H4.8Z" fill="#1c3ce8"/><path d="M5.6 4.6 L8.6 2.6 V6.4Z" fill="#fff"/><path d="M8 2.2 L11 2.2 L11 5Z" fill="#e8141c"/></svg>
<svg class="a" style="left:353.9px;top:528.9px" width="13.5" height="13.5" viewBox="0 0 16 16"><path d="M.8 13.4 L4.8 9" stroke="#7c7c7c" stroke-width="1.6" stroke-linecap="round"/><circle cx="7.6" cy="4.6" r="4.3" fill="#e4edf8" stroke="#9aa7b6" stroke-width="1.3"/><path d="M4.4 2.4 H10.4 L11.2 4.4 H4Z" fill="#e8141c"/><path d="M4 4.4 H11.2 L10.4 6.6 H4.8Z" fill="#1c3ce8"/><path d="M5.6 4.6 L8.6 2.6 V6.4Z" fill="#fff"/><path d="M8 2.2 L11 2.2 L11 5Z" fill="#e8141c"/></svg>
<div class="a" style="left:372.5px;top:529px;width:1px;height:13px;background:#a0a0a0"></div><div class="a" style="left:373.5px;top:529px;width:1px;height:13px;background:#fff"></div>
<svg class="a" style="left:380.8px;top:528.2px" width="12" height="13.5" viewBox="0 0 16 16"><path d="M2 2.4 C5 5 9 9.6 13.6 14.4 M13 1.6 C9 5.6 5 10 2.4 14" fill="none" stroke="#e01c1c" stroke-width="2.3" stroke-linecap="round"/></svg>
<div class="a" style="left:398.3px;top:529px;width:1px;height:13px;background:#a0a0a0"></div><div class="a" style="left:399.3px;top:529px;width:1px;height:13px;background:#fff"></div>
<span class="a" style="left:405.3px;top:529.6px;font:bold 9.6px/12px 'Liberation Mono',monospace;color:#1c2cf0;letter-spacing:-.9px;white-space:pre">$[] $()</span>
<div class="a" style="left:444.0px;top:529px;width:1px;height:13px;background:#a0a0a0"></div><div class="a" style="left:445.0px;top:529px;width:1px;height:13px;background:#fff"></div>
<svg class="a" style="left:452.6px;top:529.4px" width="12.5" height="12.5" viewBox="0 0 16 16"><rect x=".8" y=".8" width="14.4" height="14.4" rx="1.6" fill="#4cb84c" stroke="#2c8c34" stroke-width="1.2"/><rect x="2.4" y="2.4" width="11.2" height="5.4" fill="#7cd47c" opacity=".7"/><path d="M8 3.6 L12 7.8 H9.6 V12 H6.4 V7.8 H4Z" fill="#fff"/></svg>
<svg class="a" style="left:471.2px;top:529.4px" width="12.5" height="12.5" viewBox="0 0 16 16"><rect x=".8" y=".8" width="14.4" height="14.4" rx="1.6" fill="#4cb84c" stroke="#2c8c34" stroke-width="1.2"/><rect x="2.4" y="2.4" width="11.2" height="5.4" fill="#7cd47c" opacity=".7"/><path d="M8 12.4 L12 8.2 H9.6 V4 H6.4 V8.2 H4Z" fill="#fff"/></svg>
<div class="a" style="left:489.0px;top:529px;width:1px;height:13px;background:#a0a0a0"></div><div class="a" style="left:490.0px;top:529px;width:1px;height:13px;background:#fff"></div>
<div class="a" style="left:494.5px;top:529px;width:1px;height:13px;background:#8c8c8c"></div><div class="a" style="left:495.6px;top:529px;width:1px;height:13px;background:#fff"></div>
<svg class="a" style="left:504.9px;top:528.9px" width="12.5" height="13.5" viewBox="0 0 16 16"><path d="M1.4 1.4 L9 8 L1.4 14.6" fill="none" stroke="#3cc01c" stroke-width="2.8"/><path d="M12.6 .6 V15.4" stroke="#3c3ce8" stroke-width="1.2" stroke-dasharray="2.2 1.4"/></svg>
<svg class="a" style="left:523.1px;top:528.9px" width="12.5" height="13.5" viewBox="0 0 16 16"><path d="M14.6 1.4 L7 8 L14.6 14.6" fill="none" stroke="#3cc01c" stroke-width="2.8"/><path d="M3.4 .6 V15.4" stroke="#3c3ce8" stroke-width="1.2" stroke-dasharray="2.2 1.4"/></svg>
<svg class="a" style="left:542.8px;top:528.9px" width="12.5" height="13.5" viewBox="0 0 16 16"><path d="M2 3 L14 13.6 M14 3 L2 13.6" stroke="#e83c3c" stroke-width="1.1"/><path d="M8 .6 V15.4" stroke="#3c3ce8" stroke-width="1.2" stroke-dasharray="2.2 1.2"/></svg>
<div class="a" style="left:559.6px;top:526.4px;width:19px;height:19px;border:1px solid #7c7c7c;border-radius:2.5px;box-sizing:border-box;background:linear-gradient(180deg,#d4d4d4,#eeeeee)"></div>
<svg class="a" style="left:563.1px;top:529.2px" width="12.5" height="13.5" viewBox="0 0 16 16"><path d="M8 .6 V15.4" stroke="#e81c1c" stroke-width="1.3" stroke-dasharray="2.8 1.6"/></svg>
<div class="a" style="left:587.0px;top:529px;width:1px;height:13px;background:#a0a0a0"></div><div class="a" style="left:588.0px;top:529px;width:1px;height:13px;background:#fff"></div>
<svg class="a" style="left:595.6px;top:528.9px" width="12" height="13.5" viewBox="0 0 16 16"><rect x=".8" y=".8" width="14.4" height="14.4" rx="1.4" fill="#2ca43c" stroke="#1c7c2c" stroke-width="1.2"/><rect x="3.4" y="3.4" width="9.2" height="9.2" fill="#fff"/><path d="M4 7.6 L7 11 L12.4 3.8" fill="none" stroke="#1c8c2c" stroke-width="2.1"/></svg>
<svg class="a" style="left:614.8px;top:528.9px" width="13.5" height="13.5" viewBox="0 0 16 16"><text x="8" y="6.4" font-size="7.6" font-weight="bold" fill="#e81c24" text-anchor="middle" style="font-family:'Liberation Sans',sans-serif" textLength="14.6" lengthAdjust="spacingAndGlyphs">COD</text><path d="M1 11.6 H10" stroke="#2cb42c" stroke-width="2.2"/><path d="M9 8.4 L14.6 11.6 L9 14.8Z" fill="#2cb42c"/></svg>
<svg class="a" style="left:634.2px;top:528.9px" width="13.5" height="13.5" viewBox="0 0 16 16"><text x="8" y="6.4" font-size="7.6" font-weight="bold" fill="#e81c24" text-anchor="middle" style="font-family:'Liberation Sans',sans-serif" textLength="14.6" lengthAdjust="spacingAndGlyphs">COD</text><path d="M1 11.6 H10" stroke="#2cb42c" stroke-width="2.2"/><path d="M9 8.4 L14.6 11.6 L9 14.8Z" fill="#2cb42c"/></svg>
<svg class="a" style="left:653.6px;top:529.4px" width="12.5" height="12.5" viewBox="0 0 16 16"><rect x=".9" y=".9" width="14.2" height="14.2" fill="#dfe4ff" stroke="#1c2cf0" stroke-width="1.6"/><rect x="4" y="4" width="8" height="8" fill="none" stroke="#1c2cf0" stroke-width="1.3"/><rect x="6.6" y="6.6" width="2.8" height="2.8" fill="#1c2cf0"/></svg>
<svg class="a" style="left:672.8px;top:528.9px" width="13.5" height="13.5" viewBox="0 0 16 16"><text x="8" y="6.4" font-size="7.6" font-weight="bold" fill="#e81c24" text-anchor="middle" style="font-family:'Liberation Sans',sans-serif" textLength="14.6" lengthAdjust="spacingAndGlyphs">HTM</text><path d="M1 11.6 H10" stroke="#2cb42c" stroke-width="2.2"/><path d="M9 8.4 L14.6 11.6 L9 14.8Z" fill="#2cb42c"/></svg>
<div class="a" style="left:7px;top:547.5px;width:785px;height:1px;background:#8c8c8c"></div>
<div class="a" style="left:7px;top:548.5px;width:785px;height:17.5px;background:#f0eeee"></div>
<div class="a" style="left:184.4px;top:549.5px;width:1px;height:16px;background:#d9d7d7"></div>
<div class="a" style="left:210.3px;top:549.5px;width:1px;height:16px;background:#d9d7d7"></div>
<div class="a" style="left:232.8px;top:549.5px;width:1px;height:16px;background:#d9d7d7"></div>
<div class="a" style="left:460.5px;top:549.5px;width:1px;height:16px;background:#d9d7d7"></div>
<span style="position:absolute;left:8.0px;top:552.1px;line-height:12.2px;font:normal 9.4px/12.2px 'Liberation Sans',sans-serif;letter-spacing:-0.259px;color:#000;white-space:pre;">31:18, 1132</span>
<span style="position:absolute;left:188.4px;top:552.1px;line-height:12.2px;font:normal 9.4px/12.2px 'Liberation Sans',sans-serif;letter-spacing:-0.305px;color:#000;white-space:pre;">Ins</span>
<span style="position:absolute;left:213.4px;top:552.1px;line-height:12.2px;font:normal 9.4px/12.2px 'Liberation Sans',sans-serif;letter-spacing:-0.252px;color:#000;white-space:pre;">Win</span>
<span style="position:absolute;left:236.9px;top:552.1px;line-height:12.2px;font:normal 9.4px/12.2px 'Liberation Sans',sans-serif;letter-spacing:0.063px;color:#000;white-space:pre;">1251  (ANSI - кириллица)</span>
<span style="position:absolute;left:464.0px;top:552.1px;line-height:12.2px;font:normal 9.4px/12.2px 'Liberation Sans',sans-serif;letter-spacing:-0.148px;color:#000;white-space:pre;">"14:14007210:0"</span>
<div class="a" style="left:788.5px;top:559px;width:1.3px;height:1.3px;background:#b8b8b8;box-shadow:0 2.5px 0 #b8b8b8,0 5px 0 #b8b8b8,-2.5px 2.5px 0 #b8b8b8,-2.5px 5px 0 #b8b8b8,-5px 5px 0 #b8b8b8"></div>
<div class="a" style="left:536.5px;top:37px;width:270px;height:491.3px;background:#f0f0f0;border:1px solid #9c9c9c;box-sizing:border-box;box-shadow:1.5px 1.5px 2.5px rgba(0,0,0,.28)"></div>
<div class="a" style="left:539px;top:88.3px;width:262px;height:16.2px;border:1px solid #aecff7;border-radius:2px;box-sizing:border-box;background:linear-gradient(180deg,#ecf3fc 0,#dbe8f8 100%)"></div>
<div class="a" style="left:540px;top:140.8px;width:260px;height:1px;background:#dcdcdc"></div><div class="a" style="left:540px;top:141.8px;width:260px;height:1px;background:#fdfdfd"></div>
<div class="a" style="left:540px;top:230.4px;width:260px;height:1px;background:#dcdcdc"></div><div class="a" style="left:540px;top:231.4px;width:260px;height:1px;background:#fdfdfd"></div>
<div class="a" style="left:540px;top:287.2px;width:260px;height:1px;background:#dcdcdc"></div><div class="a" style="left:540px;top:288.2px;width:260px;height:1px;background:#fdfdfd"></div>
<div class="a" style="left:540px;top:344.0px;width:260px;height:1px;background:#dcdcdc"></div><div class="a" style="left:540px;top:345.0px;width:260px;height:1px;background:#fdfdfd"></div>
<div class="a" style="left:540px;top:400.7px;width:260px;height:1px;background:#dcdcdc"></div><div class="a" style="left:540px;top:401.7px;width:260px;height:1px;background:#fdfdfd"></div>
<div class="a" style="left:540px;top:489.9px;width:260px;height:1px;background:#dcdcdc"></div><div class="a" style="left:540px;top:490.9px;width:260px;height:1px;background:#fdfdfd"></div>
<span style="position:absolute;left:559.7px;top:41.2px;line-height:12.3px;font:normal 9.5px/12.3px 'Liberation Sans',sans-serif;letter-spacing:-0.059px;color:#000;white-space:pre;">Отправить дату в буфер обмена...</span>
<svg class="a" style="left:794px;top:43.9px" width="4" height="7" viewBox="0 0 4 7"><path d="M0 0 L4 3.5 L0 7 Z" fill="#3a3a3a"/></svg>
<span style="position:absolute;left:559.7px;top:57.6px;line-height:12.3px;font:normal 9.5px/12.3px 'Liberation Sans',sans-serif;letter-spacing:-0.029px;color:#000;white-space:pre;">Отправить Хеш файла в буфер обмена...</span>
<svg class="a" style="left:794px;top:60.2px" width="4" height="7" viewBox="0 0 4 7"><path d="M0 0 L4 3.5 L0 7 Z" fill="#3a3a3a"/></svg>
<span style="position:absolute;left:559.7px;top:73.8px;line-height:12.3px;font:normal 9.5px/12.3px 'Liberation Sans',sans-serif;letter-spacing:0.039px;color:#000;white-space:pre;">Добавить к буферу обмена...</span>
<svg class="a" style="left:794px;top:76.5px" width="4" height="7" viewBox="0 0 4 7"><path d="M0 0 L4 3.5 L0 7 Z" fill="#3a3a3a"/></svg>
<span style="position:absolute;left:559.7px;top:90.1px;line-height:12.3px;font:normal 9.5px/12.3px 'Liberation Sans',sans-serif;letter-spacing:0.164px;color:#000;white-space:pre;">В буфер различную информацию строки</span>
<svg class="a" style="left:794px;top:92.8px" width="4" height="7" viewBox="0 0 4 7"><path d="M0 0 L4 3.5 L0 7 Z" fill="#3a3a3a"/></svg>
<span style="position:absolute;left:559.7px;top:106.4px;line-height:12.3px;font:normal 9.5px/12.3px 'Liberation Sans',sans-serif;letter-spacing:0.149px;color:#000;white-space:pre;">В буфер шаблон\файл\код...</span>
<svg class="a" style="left:794px;top:109.1px" width="4" height="7" viewBox="0 0 4 7"><path d="M0 0 L4 3.5 L0 7 Z" fill="#3a3a3a"/></svg>
<span style="position:absolute;left:559.7px;top:122.8px;line-height:12.3px;font:normal 9.5px/12.3px 'Liberation Sans',sans-serif;letter-spacing:-0.014px;color:#000;white-space:pre;">Путь текущего файла в буфер в кавычках...</span>
<svg class="a" style="left:794px;top:125.4px" width="4" height="7" viewBox="0 0 4 7"><path d="M0 0 L4 3.5 L0 7 Z" fill="#3a3a3a"/></svg>
<span style="position:absolute;left:559.7px;top:147.2px;line-height:12.3px;font:normal 9.5px/12.3px 'Liberation Sans',sans-serif;letter-spacing:0.115px;color:#000;white-space:pre;">Копировать полный путь в буфер</span>
<span style="position:absolute;left:721.0px;top:147.2px;line-height:12.3px;font:normal 9.5px/12.3px 'Liberation Sans',sans-serif;letter-spacing:0.188px;color:#000;white-space:pre;">Ctrl+Shift+C</span>
<span style="position:absolute;left:559.7px;top:163.5px;line-height:12.3px;font:normal 9.5px/12.3px 'Liberation Sans',sans-serif;letter-spacing:0.108px;color:#000;white-space:pre;">Копировать имя + расш. в буфер</span>
<span style="position:absolute;left:721.6px;top:163.5px;line-height:12.3px;font:normal 9.5px/12.3px 'Liberation Sans',sans-serif;letter-spacing:0.182px;color:#000;white-space:pre;">Ctrl+Shift+X</span>
<span style="position:absolute;left:559.7px;top:179.8px;line-height:12.3px;font:normal 9.5px/12.3px 'Liberation Sans',sans-serif;letter-spacing:0.084px;color:#000;white-space:pre;">Копировать путь папки в буфер</span>
<span style="position:absolute;left:721.6px;top:179.8px;line-height:12.3px;font:normal 9.5px/12.3px 'Liberation Sans',sans-serif;letter-spacing:0.177px;color:#000;white-space:pre;">Ctrl+Shift+G</span>
<span style="position:absolute;left:559.7px;top:196.2px;line-height:12.3px;font:normal 9.5px/12.3px 'Liberation Sans',sans-serif;letter-spacing:0.074px;color:#000;white-space:pre;">Копировать чистое имя (без расш.) в буфер</span>
<span style="position:absolute;left:559.7px;top:212.4px;line-height:12.3px;font:normal 9.5px/12.3px 'Liberation Sans',sans-serif;letter-spacing:0.092px;color:#000;white-space:pre;">Копировать расширение в буфер</span>
<span style="position:absolute;left:559.7px;top:236.8px;line-height:12.3px;font:normal 9.5px/12.3px 'Liberation Sans',sans-serif;letter-spacing:0.017px;color:#000;white-space:pre;">Копировать %изменённый_путь% в буфер (TC)</span>
<span style="position:absolute;left:559.7px;top:253.0px;line-height:12.3px;font:normal 9.5px/12.3px 'Liberation Sans',sans-serif;letter-spacing:0.069px;color:#000;white-space:pre;">Копировать обрезанный путь в буфер</span>
<span style="position:absolute;left:559.7px;top:269.2px;line-height:12.3px;font:normal 9.5px/12.3px 'Liberation Sans',sans-serif;letter-spacing:0.013px;color:#000;white-space:pre;">Копировать путь без диска в буфер</span>
<span style="position:absolute;left:559.7px;top:293.7px;line-height:12.3px;font:normal 9.5px/12.3px 'Liberation Sans',sans-serif;letter-spacing:0.137px;color:#000;white-space:pre;">Копировать путь с короткими именами (8.3)</span>
<span style="position:absolute;left:559.7px;top:309.9px;line-height:12.3px;font:normal 9.5px/12.3px 'Liberation Sans',sans-serif;letter-spacing:0.098px;color:#000;white-space:pre;">Копировать короткое имя (8.3)</span>
<span style="position:absolute;left:559.7px;top:326.2px;line-height:12.3px;font:normal 9.5px/12.3px 'Liberation Sans',sans-serif;letter-spacing:0.227px;color:#000;white-space:pre;">Копировать file:///короткий_путь (ссылка)</span>
<span style="position:absolute;left:559.7px;top:350.5px;line-height:12.3px;font:normal 9.5px/12.3px 'Liberation Sans',sans-serif;letter-spacing:0.044px;color:#000;white-space:pre;">Копировать путь с переменной %a в буфер</span>
<span style="position:absolute;left:559.7px;top:366.8px;line-height:12.3px;font:normal 9.5px/12.3px 'Liberation Sans',sans-serif;letter-spacing:0.067px;color:#000;white-space:pre;">Копировать путь с переменной %a в кавычках</span>
<span style="position:absolute;left:559.7px;top:383.1px;line-height:12.3px;font:normal 9.5px/12.3px 'Liberation Sans',sans-serif;letter-spacing:0.099px;color:#000;white-space:pre;">Копировать путь папки с переменной %a</span>
<span style="position:absolute;left:559.7px;top:406.9px;line-height:12.3px;font:normal 9.5px/12.3px 'Liberation Sans',sans-serif;letter-spacing:0.012px;color:#000;white-space:pre;">В буфер строку СКРИПТа для вставки в меню</span>
<span style="position:absolute;left:559.7px;top:423.2px;line-height:12.3px;font:normal 9.5px/12.3px 'Liberation Sans',sans-serif;letter-spacing:0.049px;color:#000;white-space:pre;">В буфер строку СКРИПТа с 1-м параметром...</span>
<span style="position:absolute;left:559.7px;top:439.5px;line-height:12.3px;font:normal 9.5px/12.3px 'Liberation Sans',sans-serif;letter-spacing:0.041px;color:#000;white-space:pre;">В буфер строку СКРИПТа с 2-мя параметрами...</span>
<span style="position:absolute;left:559.7px;top:455.8px;line-height:12.3px;font:normal 9.5px/12.3px 'Liberation Sans',sans-serif;letter-spacing:0.041px;color:#000;white-space:pre;">В буфер строку СКРИПТа с 3-мя параметрами...</span>
<span style="position:absolute;left:559.7px;top:472.1px;line-height:12.3px;font:normal 9.5px/12.3px 'Liberation Sans',sans-serif;letter-spacing:0.041px;color:#000;white-space:pre;">В буфер строку СКРИПТа с 4-мя параметрами...</span>
<span style="position:absolute;left:559.7px;top:496.4px;line-height:12.3px;font:normal 9.5px/12.3px 'Liberation Sans',sans-serif;letter-spacing:0.058px;color:#000;white-space:pre;">В буфер строку ФАЙЛа для вставки в меню (Total)</span>
<span style="position:absolute;left:559.7px;top:512.6px;line-height:12.3px;font:normal 9.5px/12.3px 'Liberation Sans',sans-serif;letter-spacing:0.028px;color:#000;white-space:pre;">В буфер строку ФАЙЛа для вставки в меню (Akel)</span>
<svg class="a" style="left:541.0px;top:40.1px" width="14.5" height="14.5" viewBox="0 0 16 16"><path d="M8 .4 L14 4 H2Z M8 15.6 L14 12 H2Z" fill="#e4f0ec" stroke="#4c9c84" stroke-width=".8"/><rect x=".4" y="3.6" width="15.2" height="8.8" fill="#5420d8"/><text x="8" y="10.6" font-size="6.8" font-weight="bold" fill="#f4e4f4" text-anchor="middle" style="font-family:'Liberation Sans',sans-serif" textLength="13.6" lengthAdjust="spacingAndGlyphs">DATA</text></svg>
<svg class="a" style="left:541.0px;top:56.5px" width="14.5" height="14.5" viewBox="0 0 16 16"><rect x=".4" y="2.6" width="15.2" height="10.8" fill="#f8f01c"/><text x="8" y="11.6" font-size="9.4" font-weight="bold" fill="#b4141c" text-anchor="middle" style="font-family:'Liberation Sans',sans-serif" textLength="15.4" lengthAdjust="spacingAndGlyphs">Hash</text><path d="M.6 12.6 H15.4" stroke="#b4141c" stroke-width=".7"/></svg>
<svg class="a" style="left:541.0px;top:72.8px" width="14.5" height="14.5" viewBox="0 0 16 16"><rect x="1.2" y="3" width="11.6" height="12.4" rx=".8" fill="#fff" stroke="#6c2c70" stroke-width="1.1"/><rect x="4.6" y="1.2" width="4.8" height="2.6" rx=".8" fill="#fff" stroke="#6c2c70" stroke-width="1"/><path d="M7 6 V12.8 M3.6 9.4 H10.4" stroke="#1c8c2c" stroke-width="3.2"/><path d="M7 7 V11.8 M4.6 9.4 H9.4" stroke="#9ce09c" stroke-width="1.2"/></svg>
<svg class="a" style="left:541.0px;top:89.0px" width="14.5" height="14.5" viewBox="0 0 16 16"><rect x="1.2" y="3" width="11.6" height="12.4" rx=".8" fill="#fff" stroke="#6c2c70" stroke-width="1.1"/><rect x="4.6" y="1.2" width="4.8" height="2.6" rx=".8" fill="#fff" stroke="#6c2c70" stroke-width="1"/></svg>
<svg class="a" style="left:541.0px;top:105.3px" width="14.5" height="14.5" viewBox="0 0 16 16"><path d="M1 1 H7.4 L9.6 3.2 V11.4 H1Z" fill="#dcdcdc" stroke="#333" stroke-width=".9"/><path d="M2.6 4 H7.6 M2.6 6 H7.6 M2.6 8 H6" stroke="#333" stroke-width=".7"/><path d="M6.4 4.6 H12 L15 7.6 V15.4 H6.4Z" fill="#1a1a1a"/><rect x="7.8" y="9.4" width="5.8" height="5" fill="#4c5c5c"/><path d="M12 4.6 V7.6 H15Z" fill="#ccc"/></svg>
<svg class="a" style="left:541.0px;top:121.7px" width="14.5" height="14.5" viewBox="0 0 16 16"><rect x=".5" y="4.8" width="14.6" height="6.6" rx=".6" fill="#fff" stroke="#b4b4b4" stroke-width=".9"/><path d="M2.6 8.8 H12.6" stroke="#e81c24" stroke-width="1.7" stroke-dasharray="1.5 1.1"/><path d="M1.8 5.8 V8 M13.6 5.8 V8" stroke="#e81c24" stroke-width="1"/><path d="M7.6000000000000005 1.7 L9.4 3.5 L11.200000000000001 1.7 M9.4 3.3 V4.8 M7.6000000000000005 14.5 L9.4 12.7 L11.200000000000001 14.5 M9.4 12.9 V11.4" fill="none" stroke="#111" stroke-width="1.25"/></svg>
<svg class="a" style="left:541.0px;top:146.2px" width="14.5" height="14.5" viewBox="0 0 16 16"><rect x=".5" y="4.8" width="14.6" height="6.6" rx=".6" fill="#fff" stroke="#555" stroke-width=".9"/><text x="7.8" y="10.5" font-size="6.2" font-weight="bold" fill="#111" text-anchor="middle" style="font-family:'Liberation Sans',sans-serif" textLength="10.4" lengthAdjust="spacingAndGlyphs">C:\</text><path d="M9.799999999999999 1.7 L11.6 3.5 L13.4 1.7 M11.6 3.3 V4.8 M9.799999999999999 14.5 L11.6 12.7 L13.4 14.5 M11.6 12.9 V11.4" fill="none" stroke="#111" stroke-width="1.25"/></svg>
<svg class="a" style="left:541.0px;top:162.4px" width="14.5" height="14.5" viewBox="0 0 16 16"><path d="M.4 5 H15.6 M.4 12 H15.6" stroke="#4c4c6c" stroke-width=".8"/><text x="8" y="10.9" font-size="6.6" font-weight="bold" fill="#1c24d0" text-anchor="middle" style="font-family:'Liberation Sans',sans-serif" textLength="14.6" lengthAdjust="spacingAndGlyphs" stroke="#1c24d0" stroke-width=".2">NAME</text><path d="M9.8 1.2 L11.6 3.2 L13.4 1.2 M11.6 3 V5 M9.8 15.6 L11.6 13.8 L13.4 15.6 M11.6 14 V12" fill="none" stroke="#111" stroke-width="1.2"/></svg>
<svg class="a" style="left:541.0px;top:178.8px" width="14.5" height="14.5" viewBox="0 0 16 16"><rect x=".5" y="4.8" width="14.6" height="6.6" rx=".6" fill="#1ce4f0" stroke="#8cb4bc" stroke-width=".9"/><path d="M3.4 10.6 L7.2 5.6 M7 10.6 L10.8 5.6" stroke="#111" stroke-width="1.7"/><path d="M9.799999999999999 1.7 L11.6 3.5 L13.4 1.7 M11.6 3.3 V4.8 M9.799999999999999 14.5 L11.6 12.7 L13.4 14.5 M11.6 12.9 V11.4" fill="none" stroke="#111" stroke-width="1.25"/></svg>
<svg class="a" style="left:541.0px;top:195.1px" width="14.5" height="14.5" viewBox="0 0 16 16"><path d="M.4 5 H15.6 M.4 12 H15.6" stroke="#4c4c6c" stroke-width=".8"/><text x="8" y="10.9" font-size="6.6" font-weight="bold" fill="#1c24d0" text-anchor="middle" style="font-family:'Liberation Sans',sans-serif" textLength="14.6" lengthAdjust="spacingAndGlyphs" stroke="#1c24d0" stroke-width=".2">NAME</text><path d="M9.8 1.2 L11.6 3.2 L13.4 1.2 M11.6 3 V5 M9.8 15.6 L11.6 13.8 L13.4 15.6 M11.6 14 V12" fill="none" stroke="#111" stroke-width="1.2"/></svg>
<svg class="a" style="left:541.0px;top:211.3px" width="14.5" height="14.5" viewBox="0 0 16 16"><rect x=".5" y="4.8" width="14.6" height="6.6" rx=".6" fill="#fff" stroke="#555" stroke-width=".9"/><text x="7.8" y="10.5" font-size="6.4" font-weight="bold" fill="#111" text-anchor="middle" style="font-family:'Liberation Sans',sans-serif" textLength="11" lengthAdjust="spacingAndGlyphs">EXT</text><path d="M9.799999999999999 1.7 L11.6 3.5 L13.4 1.7 M11.6 3.3 V4.8 M9.799999999999999 14.5 L11.6 12.7 L13.4 14.5 M11.6 12.9 V11.4" fill="none" stroke="#111" stroke-width="1.25"/></svg>
<svg class="a" style="left:541.0px;top:235.8px" width="14.5" height="14.5" viewBox="0 0 16 16"><rect x=".5" y="4.8" width="14.6" height="6.6" rx=".6" fill="#f4f01c" stroke="#b4b46c" stroke-width=".9"/><text x="7.8" y="10.5" font-size="6.2" font-weight="bold" fill="#222" text-anchor="middle" style="font-family:'Liberation Sans',sans-serif" textLength="8" lengthAdjust="spacingAndGlyphs">%/</text><rect x="10.4" y="8.6" width="2" height="2" fill="#222"/><path d="M9.799999999999999 1.7 L11.6 3.5 L13.4 1.7 M11.6 3.3 V4.8 M9.799999999999999 14.5 L11.6 12.7 L13.4 14.5 M11.6 12.9 V11.4" fill="none" stroke="#111" stroke-width="1.25"/></svg>
<svg class="a" style="left:541.0px;top:251.9px" width="14.5" height="14.5" viewBox="0 0 16 16"><rect x=".5" y="4.8" width="14.6" height="6.6" rx=".6" fill="#1ce4f0" stroke="#8cb4bc" stroke-width=".9"/><path d="M3.4 10.6 L7.2 5.6 M7 10.6 L10.8 5.6" stroke="#111" stroke-width="1.7"/><path d="M9.799999999999999 1.7 L11.6 3.5 L13.4 1.7 M11.6 3.3 V4.8 M9.799999999999999 14.5 L11.6 12.7 L13.4 14.5 M11.6 12.9 V11.4" fill="none" stroke="#111" stroke-width="1.25"/></svg>
<svg class="a" style="left:541.0px;top:268.1px" width="14.5" height="14.5" viewBox="0 0 16 16"><rect x=".5" y="4.8" width="14.6" height="6.6" rx=".6" fill="#1ce4f0" stroke="#8cb4bc" stroke-width=".9"/><path d="M3.4 10.6 L7.2 5.6 M7 10.6 L10.8 5.6" stroke="#111" stroke-width="1.7"/><path d="M9.799999999999999 1.7 L11.6 3.5 L13.4 1.7 M11.6 3.3 V4.8 M9.799999999999999 14.5 L11.6 12.7 L13.4 14.5 M11.6 12.9 V11.4" fill="none" stroke="#111" stroke-width="1.25"/></svg>
<svg class="a" style="left:541.0px;top:292.6px" width="14.5" height="14.5" viewBox="0 0 16 16"><rect x=".5" y="4.8" width="14.6" height="6.6" rx=".6" fill="#fff" stroke="#7c8c7c" stroke-width=".9"/><path d="M3.4 9 C5 6 6.8 10.6 8.6 7.6 L10.6 6.8" fill="none" stroke="#1c34c0" stroke-width="1.5"/><path d="M9.799999999999999 1.7 L11.6 3.5 L13.4 1.7 M11.6 3.3 V4.8 M9.799999999999999 14.5 L11.6 12.7 L13.4 14.5 M11.6 12.9 V11.4" fill="none" stroke="#111" stroke-width="1.25"/></svg>
<svg class="a" style="left:541.0px;top:308.8px" width="14.5" height="14.5" viewBox="0 0 16 16"><rect x=".5" y="4.8" width="14.6" height="6.6" rx=".6" fill="#fff" stroke="#7c8c7c" stroke-width=".9"/><path d="M3.4 9 C5 6 6.8 10.6 8.6 7.6 L10.6 6.8" fill="none" stroke="#1c34c0" stroke-width="1.5"/><path d="M9.799999999999999 1.7 L11.6 3.5 L13.4 1.7 M11.6 3.3 V4.8 M9.799999999999999 14.5 L11.6 12.7 L13.4 14.5 M11.6 12.9 V11.4" fill="none" stroke="#111" stroke-width="1.25"/></svg>
<svg class="a" style="left:541.0px;top:325.1px" width="14.5" height="14.5" viewBox="0 0 16 16"><rect x=".5" y="4.8" width="14.6" height="6.6" rx=".6" fill="#fff" stroke="#7c8c7c" stroke-width=".9"/><path d="M3.4 9 C5 6 6.8 10.6 8.6 7.6 L10.6 6.8" fill="none" stroke="#1c34c0" stroke-width="1.5"/><path d="M9.799999999999999 1.7 L11.6 3.5 L13.4 1.7 M11.6 3.3 V4.8 M9.799999999999999 14.5 L11.6 12.7 L13.4 14.5 M11.6 12.9 V11.4" fill="none" stroke="#111" stroke-width="1.25"/></svg>
<svg class="a" style="left:541.0px;top:349.4px" width="14.5" height="14.5" viewBox="0 0 16 16"><rect x=".5" y="4.8" width="14.6" height="6.6" rx=".6" fill="#fff" stroke="#8ca0b4" stroke-width=".9"/><text x="7.4" y="10.7" font-size="7" font-weight="bold" fill="#1c34e8" text-anchor="middle" style="font-family:'Liberation Sans',sans-serif" textLength="12.4" lengthAdjust="spacingAndGlyphs" stroke="#1c34e8" stroke-width=".25">AKEL</text><path d="M9.6 1.7 L11.4 3.5 L13.200000000000001 1.7 M11.4 3.3 V4.8 M9.6 14.5 L11.4 12.7 L13.200000000000001 14.5 M11.4 12.9 V11.4" fill="none" stroke="#111" stroke-width="1.25"/></svg>
<svg class="a" style="left:541.0px;top:365.6px" width="14.5" height="14.5" viewBox="0 0 16 16"><rect x=".5" y="4.8" width="14.6" height="6.6" rx=".6" fill="#fff" stroke="#8ca0b4" stroke-width=".9"/><text x="7.4" y="10.7" font-size="7" font-weight="bold" fill="#1c34e8" text-anchor="middle" style="font-family:'Liberation Sans',sans-serif" textLength="12.4" lengthAdjust="spacingAndGlyphs" stroke="#1c34e8" stroke-width=".25">AKEL</text><path d="M9.6 1.7 L11.4 3.5 L13.200000000000001 1.7 M11.4 3.3 V4.8 M9.6 14.5 L11.4 12.7 L13.200000000000001 14.5 M11.4 12.9 V11.4" fill="none" stroke="#111" stroke-width="1.25"/></svg>
<svg class="a" style="left:541.0px;top:381.9px" width="14.5" height="14.5" viewBox="0 0 16 16"><rect x=".5" y="4.8" width="14.6" height="6.6" rx=".6" fill="#fff" stroke="#8ca0b4" stroke-width=".9"/><text x="7.4" y="10.7" font-size="7" font-weight="bold" fill="#1c34e8" text-anchor="middle" style="font-family:'Liberation Sans',sans-serif" textLength="12.4" lengthAdjust="spacingAndGlyphs" stroke="#1c34e8" stroke-width=".25">AKEL</text><path d="M9.6 1.7 L11.4 3.5 L13.200000000000001 1.7 M11.4 3.3 V4.8 M9.6 14.5 L11.4 12.7 L13.200000000000001 14.5 M11.4 12.9 V11.4" fill="none" stroke="#111" stroke-width="1.25"/></svg>
<svg class="a" style="left:541.0px;top:405.8px" width="14.5" height="14.5" viewBox="0 0 16 16"><rect x=".5" y="4.8" width="14.6" height="6.6" rx=".6" fill="#fff" stroke="#8ca08c" stroke-width=".9"/><text x="7.4" y="10.7" font-size="7" font-weight="bold" fill="#f01c24" text-anchor="middle" style="font-family:'Liberation Sans',sans-serif" textLength="12.4" lengthAdjust="spacingAndGlyphs" stroke="#f01c24" stroke-width=".25">AKEL</text><path d="M9.6 1.7 L11.4 3.5 L13.200000000000001 1.7 M11.4 3.3 V4.8 M9.6 14.5 L11.4 12.7 L13.200000000000001 14.5 M11.4 12.9 V11.4" fill="none" stroke="#111" stroke-width="1.25"/></svg>
<svg class="a" style="left:541.0px;top:422.1px" width="14.5" height="14.5" viewBox="0 0 16 16"><rect x=".5" y="4.8" width="14.6" height="6.6" rx=".6" fill="#fff" stroke="#8ca08c" stroke-width=".9"/><text x="7.4" y="10.7" font-size="7" font-weight="bold" fill="#f01c24" text-anchor="middle" style="font-family:'Liberation Sans',sans-serif" textLength="12.4" lengthAdjust="spacingAndGlyphs" stroke="#f01c24" stroke-width=".25">AKEL</text><path d="M9.6 1.7 L11.4 3.5 L13.200000000000001 1.7 M11.4 3.3 V4.8 M9.6 14.5 L11.4 12.7 L13.200000000000001 14.5 M11.4 12.9 V11.4" fill="none" stroke="#111" stroke-width="1.25"/></svg>
<svg class="a" style="left:541.0px;top:438.4px" width="14.5" height="14.5" viewBox="0 0 16 16"><rect x=".5" y="4.8" width="14.6" height="6.6" rx=".6" fill="#fff" stroke="#8ca08c" stroke-width=".9"/><text x="7.4" y="10.7" font-size="7" font-weight="bold" fill="#f01c24" text-anchor="middle" style="font-family:'Liberation Sans',sans-serif" textLength="12.4" lengthAdjust="spacingAndGlyphs" stroke="#f01c24" stroke-width=".25">AKEL</text><path d="M9.6 1.7 L11.4 3.5 L13.200000000000001 1.7 M11.4 3.3 V4.8 M9.6 14.5 L11.4 12.7 L13.200000000000001 14.5 M11.4 12.9 V11.4" fill="none" stroke="#111" stroke-width="1.25"/></svg>
<svg class="a" style="left:541.0px;top:454.6px" width="14.5" height="14.5" viewBox="0 0 16 16"><rect x=".5" y="4.8" width="14.6" height="6.6" rx=".6" fill="#fff" stroke="#8ca08c" stroke-width=".9"/><text x="7.4" y="10.7" font-size="7" font-weight="bold" fill="#f01c24" text-anchor="middle" style="font-family:'Liberation Sans',sans-serif" textLength="12.4" lengthAdjust="spacingAndGlyphs" stroke="#f01c24" stroke-width=".25">AKEL</text><path d="M9.6 1.7 L11.4 3.5 L13.200000000000001 1.7 M11.4 3.3 V4.8 M9.6 14.5 L11.4 12.7 L13.200000000000001 14.5 M11.4 12.9 V11.4" fill="none" stroke="#111" stroke-width="1.25"/></svg>
<svg class="a" style="left:541.0px;top:470.9px" width="14.5" height="14.5" viewBox="0 0 16 16"><rect x=".5" y="4.8" width="14.6" height="6.6" rx=".6" fill="#fff" stroke="#8ca08c" stroke-width=".9"/><text x="7.4" y="10.7" font-size="7" font-weight="bold" fill="#f01c24" text-anchor="middle" style="font-family:'Liberation Sans',sans-serif" textLength="12.4" lengthAdjust="spacingAndGlyphs" stroke="#f01c24" stroke-width=".25">AKEL</text><path d="M9.6 1.7 L11.4 3.5 L13.200000000000001 1.7 M11.4 3.3 V4.8 M9.6 14.5 L11.4 12.7 L13.200000000000001 14.5 M11.4 12.9 V11.4" fill="none" stroke="#111" stroke-width="1.25"/></svg>
<svg class="a" style="left:541.0px;top:495.2px" width="14.5" height="14.5" viewBox="0 0 16 16"><rect x=".5" y="4.8" width="14.6" height="6.6" rx=".6" fill="#fff" stroke="#8ca08c" stroke-width=".9"/><text x="7.4" y="10.7" font-size="7" font-weight="bold" fill="#f01c24" text-anchor="middle" style="font-family:'Liberation Sans',sans-serif" textLength="12.4" lengthAdjust="spacingAndGlyphs" stroke="#f01c24" stroke-width=".25">AKEL</text><path d="M9.6 1.7 L11.4 3.5 L13.200000000000001 1.7 M11.4 3.3 V4.8 M9.6 14.5 L11.4 12.7 L13.200000000000001 14.5 M11.4 12.9 V11.4" fill="none" stroke="#111" stroke-width="1.25"/></svg>
<svg class="a" style="left:541.0px;top:511.5px" width="14.5" height="14.5" viewBox="0 0 16 16"><rect x=".5" y="4.8" width="14.6" height="6.6" rx=".6" fill="#fff" stroke="#8ca08c" stroke-width=".9"/><text x="7.4" y="10.7" font-size="7" font-weight="bold" fill="#f01c24" text-anchor="middle" style="font-family:'Liberation Sans',sans-serif" textLength="12.4" lengthAdjust="spacingAndGlyphs" stroke="#f01c24" stroke-width=".25">AKEL</text><path d="M9.6 1.7 L11.4 3.5 L13.200000000000001 1.7 M11.4 3.3 V4.8 M9.6 14.5 L11.4 12.7 L13.200000000000001 14.5 M11.4 12.9 V11.4" fill="none" stroke="#111" stroke-width="1.25"/></svg>
<div class="a" style="left:305px;top:86px;width:233px;height:199.5px;background:#f0f0f0;border:1px solid #9c9c9c;box-sizing:border-box;box-shadow:1.5px 1.5px 2.5px rgba(0,0,0,.28)"></div>
<div class="a" style="left:308px;top:124.5px;width:227px;height:1px;background:#dcdcdc"></div><div class="a" style="left:308px;top:125.5px;width:227px;height:1px;background:#fdfdfd"></div>
<div class="a" style="left:308px;top:165.2px;width:227px;height:1px;background:#dcdcdc"></div><div class="a" style="left:308px;top:166.2px;width:227px;height:1px;background:#fdfdfd"></div>
<div class="a" style="left:308px;top:205.8px;width:227px;height:1px;background:#dcdcdc"></div><div class="a" style="left:308px;top:206.8px;width:227px;height:1px;background:#fdfdfd"></div>
<div class="a" style="left:308px;top:246.5px;width:227px;height:1px;background:#dcdcdc"></div><div class="a" style="left:308px;top:247.5px;width:227px;height:1px;background:#fdfdfd"></div>
<span style="position:absolute;left:327.6px;top:90.2px;line-height:12.3px;font:normal 9.5px/12.3px 'Liberation Sans',sans-serif;letter-spacing:0.045px;color:#000;white-space:pre;">Отправить в буфер строку</span>
<span style="position:absolute;left:465.6px;top:90.2px;line-height:12.3px;font:normal 9.5px/12.3px 'Liberation Sans',sans-serif;letter-spacing:0.169px;color:#000;white-space:pre;">Ctrl+Shift+L</span>
<span style="position:absolute;left:327.6px;top:106.5px;line-height:12.3px;font:normal 9.5px/12.3px 'Liberation Sans',sans-serif;letter-spacing:0.071px;color:#000;white-space:pre;">В буфер строку (без начальных пробелов)</span>
<span style="position:absolute;left:327.6px;top:131.2px;line-height:12.3px;font:normal 9.5px/12.3px 'Liberation Sans',sans-serif;letter-spacing:0.016px;color:#000;white-space:pre;">В буфер строку (левее курсора)</span>
<span style="position:absolute;left:327.6px;top:147.3px;line-height:12.3px;font:normal 9.5px/12.3px 'Liberation Sans',sans-serif;letter-spacing:0.043px;color:#000;white-space:pre;">В буфер строку (правее курсора)</span>
<span style="position:absolute;left:327.6px;top:171.8px;line-height:12.3px;font:normal 9.5px/12.3px 'Liberation Sans',sans-serif;letter-spacing:-0.008px;color:#000;white-space:pre;">В буфер слово (левее курсора)</span>
<span style="position:absolute;left:486.7px;top:171.8px;line-height:12.3px;font:normal 9.5px/12.3px 'Liberation Sans',sans-serif;letter-spacing:0.105px;color:#000;white-space:pre;">Ctrl+K</span>
<span style="position:absolute;left:327.6px;top:187.9px;line-height:12.3px;font:normal 9.5px/12.3px 'Liberation Sans',sans-serif;letter-spacing:0.036px;color:#000;white-space:pre;">В буфер слово (правее курсора)</span>
<span style="position:absolute;left:327.6px;top:212.4px;line-height:12.3px;font:normal 9.5px/12.3px 'Liberation Sans',sans-serif;letter-spacing:0.041px;color:#000;white-space:pre;">В буфер символ (левее курсора)</span>
<span style="position:absolute;left:327.6px;top:228.7px;line-height:12.3px;font:normal 9.5px/12.3px 'Liberation Sans',sans-serif;letter-spacing:0.053px;color:#000;white-space:pre;">В буфер символ (правее курсора)</span>
<span style="position:absolute;left:327.6px;top:253.0px;line-height:12.3px;font:normal 9.5px/12.3px 'Liberation Sans',sans-serif;letter-spacing:-0.007px;color:#000;white-space:pre;">В буфер текст от курсора вверх</span>
<span style="position:absolute;left:327.6px;top:269.4px;line-height:12.3px;font:normal 9.5px/12.3px 'Liberation Sans',sans-serif;letter-spacing:0.039px;color:#000;white-space:pre;">В буфер текст от курсора вниз</span>
<svg class="a" style="left:309.4px;top:89.4px" width="14" height="14" viewBox="0 0 16 16"><rect x="0.8" y="6" width="14.4" height="4" fill="#fff" stroke="#2828a8" stroke-width="1.15"/><path d="M2.4000000000000004 8 H13.8" stroke="#e8508c" stroke-width="1.1" stroke-dasharray="1.2 .9"/></svg>
<svg class="a" style="left:309.4px;top:105.7px" width="14" height="14" viewBox="0 0 16 16"><rect x="0.8" y="6" width="14.4" height="4" fill="#fff" stroke="#2828a8" stroke-width="1.15"/><path d="M2.4000000000000004 8 H13.8" stroke="#e8508c" stroke-width="1.1" stroke-dasharray="1.2 .9"/></svg>
<svg class="a" style="left:309.4px;top:130.3px" width="14" height="14" viewBox="0 0 16 16"><rect x="0.8" y="6" width="11.4" height="4" fill="#fff" stroke="#2828a8" stroke-width="1.15"/><path d="M2.4000000000000004 8 H10.8" stroke="#e8508c" stroke-width="1.1" stroke-dasharray="1.2 .9"/><path d="M14 2.4 V14" stroke="#222" stroke-width="1.2"/></svg>
<svg class="a" style="left:309.4px;top:146.5px" width="14" height="14" viewBox="0 0 16 16"><rect x="3.8" y="6" width="11.4" height="4" fill="#fff" stroke="#2828a8" stroke-width="1.15"/><path d="M5.4 8 H13.799999999999999" stroke="#e8508c" stroke-width="1.1" stroke-dasharray="1.2 .9"/><path d="M2 2.4 V14" stroke="#222" stroke-width="1.2"/></svg>
<svg class="a" style="left:309.4px;top:170.9px" width="14" height="14" viewBox="0 0 16 16"><rect x="3" y="5.4" width="5.6" height="5.2" rx=".6" fill="#c8d4f4" stroke="#2c3cb8" stroke-width="1.2"/><path d="M11.4 2.6 V14" stroke="#222" stroke-width="1.2"/></svg>
<svg class="a" style="left:309.4px;top:187.1px" width="14" height="14" viewBox="0 0 16 16"><rect x="7.4" y="5.4" width="5.6" height="5.2" rx=".6" fill="#c8d4f4" stroke="#2c3cb8" stroke-width="1.2"/><path d="M5 2.6 V14" stroke="#222" stroke-width="1.2"/></svg>
<svg class="a" style="left:309.4px;top:211.6px" width="14" height="14" viewBox="0 0 16 16"><rect x="4.4" y="5.8" width="4.2" height="4.4" rx=".6" fill="#c8d4f4" stroke="#2c3cb8" stroke-width="1.2"/><path d="M11.2 2.6 V14" stroke="#222" stroke-width="1.2"/></svg>
<svg class="a" style="left:309.4px;top:227.8px" width="14" height="14" viewBox="0 0 16 16"><rect x="7.4" y="5.8" width="4.2" height="4.4" rx=".6" fill="#c8d4f4" stroke="#2c3cb8" stroke-width="1.2"/><path d="M5.2 2.6 V14" stroke="#222" stroke-width="1.2"/></svg>
<svg class="a" style="left:309.4px;top:252.2px" width="14" height="14" viewBox="0 0 16 16"><path d="M.6 2 H14.4 M.6 4.6 H14.4 M.6 7.2 H10.4" stroke="#4c5cf0" stroke-width="1.6"/><path d="M12.6 7.2 V13.6" stroke="#222" stroke-width="1.2"/></svg>
<svg class="a" style="left:309.4px;top:268.5px" width="14" height="14" viewBox="0 0 16 16"><path d="M5.6 8.8 H15.4 M1.6 11.4 H15.4 M1.6 14 H15.4" stroke="#4c5cf0" stroke-width="1.6"/><path d="M3.4 2.4 V8.8" stroke="#222" stroke-width="1.2"/></svg>
</body></html>
